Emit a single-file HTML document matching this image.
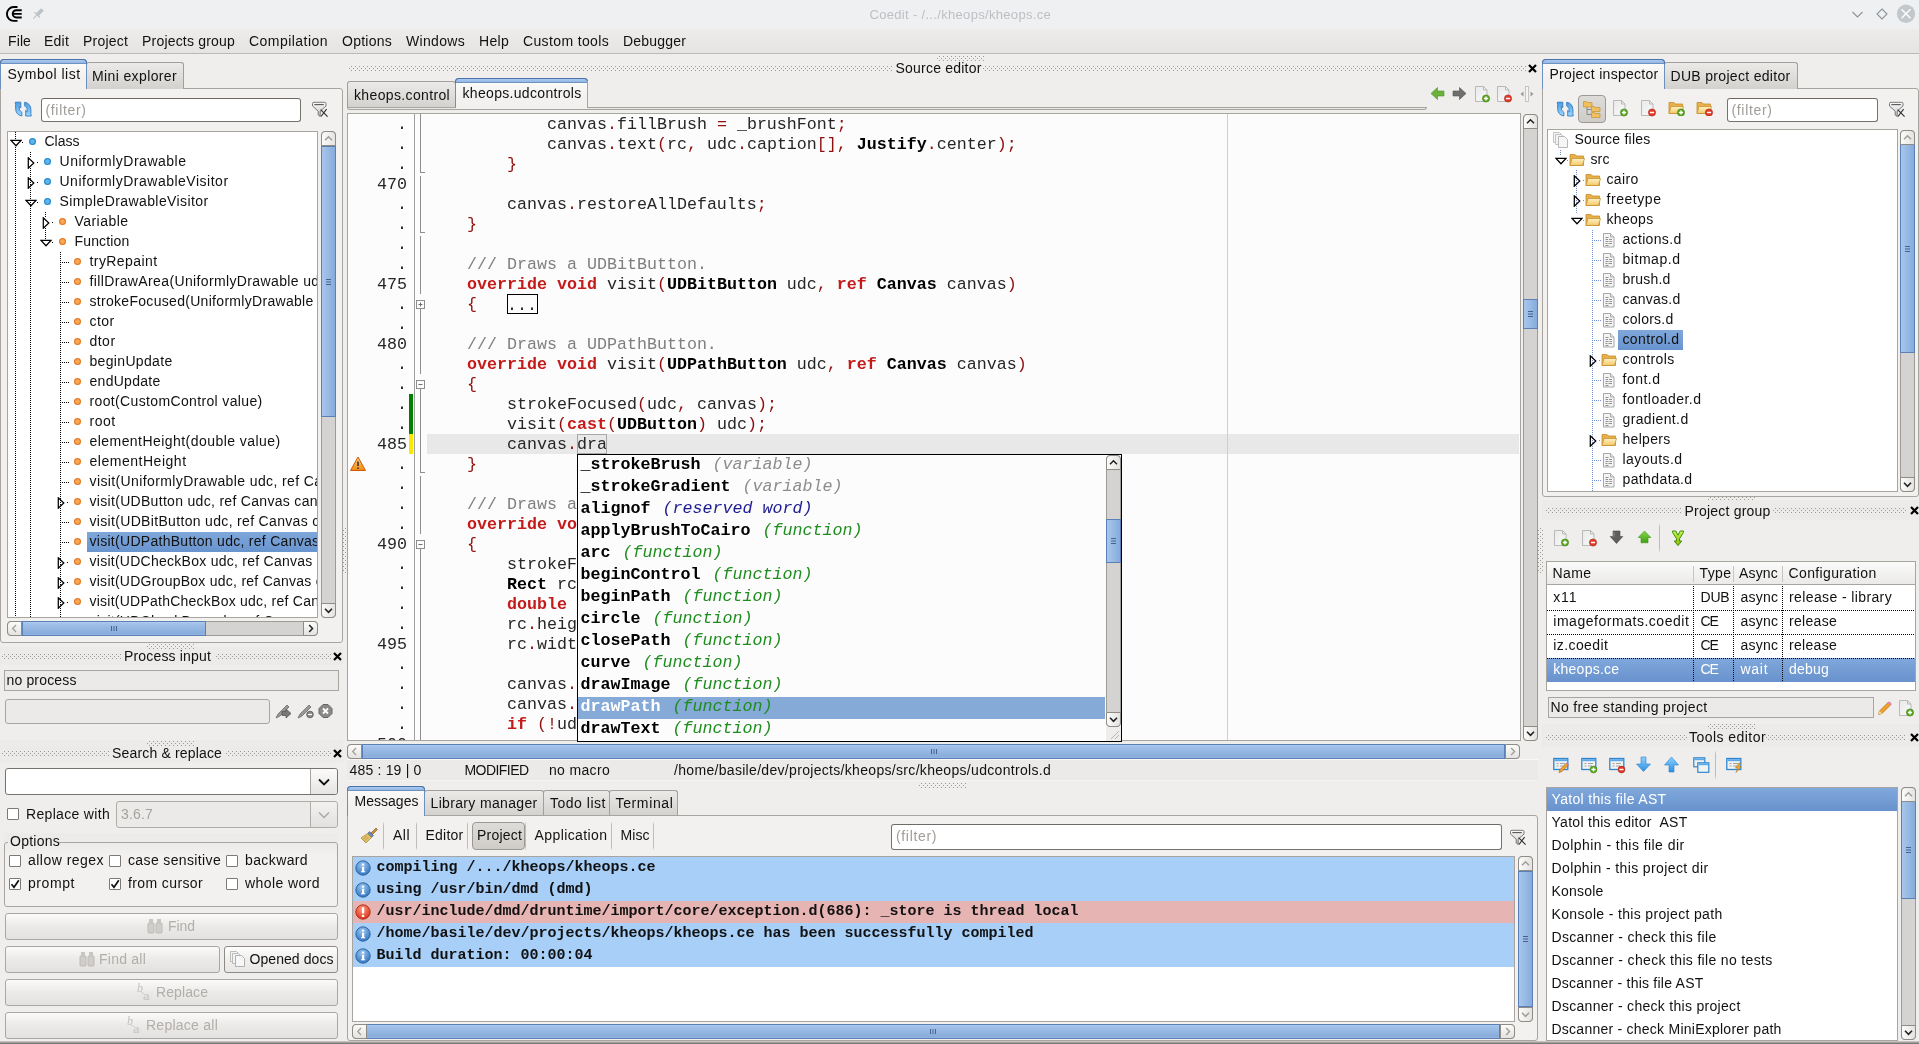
<!DOCTYPE html><html><head><meta charset="utf-8"><style>
html,body{margin:0;padding:0}
body{width:1919px;height:1044px;position:relative;overflow:hidden;background:#efeeec;font-family:'Liberation Sans', sans-serif;font-size:14px;color:#000}
div,svg{position:absolute;box-sizing:border-box}
.t{white-space:pre}
</style></head><body><div id="root" style="left:0;top:0;width:1919px;height:1044px;will-change:transform;">
<div style="left:0px;top:0px;width:1919px;height:29px;background:#eff0f1;"></div>
<svg style="left:0px;top:0px" width="50" height="29"><path d="M17.5 7H13.6A6.7 6.95 0 0 0 13.6 20.9H17.5" stroke="#000" stroke-width="1.9" fill="none"/><path d="M21.7 10.2H16.3A3.6 3.65 0 0 0 16.3 17.5H21.7M13.6 13.9H21.7" stroke="#000" stroke-width="1.9" fill="none"/><path d="M33.3 18.7L36.8 15.2M34.3 12.2L39.8 17.5" stroke="#bcc3c8" stroke-width="1.1"/><path d="M36 13.3L41.2 8.2L43.8 10.8L38.7 16Z" fill="#bcc3c8"/></svg>
<div class="t" style="left:869.5px;top:7.09px;font-size:13px;line-height:16px;color:#bcc0c4;letter-spacing:0.32px;">Coedit - /.../kheops/kheops.ce</div>
<svg style="left:1848px;top:4px" width="70" height="22"><path d="M4.5 8L9.5 13L14.5 8" stroke="#8d9398" stroke-width="1.1" fill="none"/><path d="M34 5L39 10L34 15L29 10Z" stroke="#8d9398" stroke-width="1.1" fill="none"/><circle cx="58" cy="9.8" r="9.2" fill="#c3c8cc"/><path d="M53.5 5.3L62.5 14.3M62.5 5.3L53.5 14.3" stroke="#fff" stroke-width="1.3"/></svg>
<div style="left:0px;top:29px;width:1919px;height:24px;background:linear-gradient(#edeceb,#e5e4e2);"></div>
<div style="left:0px;top:53px;width:1919px;height:1px;background:#bcb9b5;"></div>
<div class="t" style="left:8px;top:32.15px;font-size:14px;line-height:18px;color:#111;letter-spacing:0.113px;">File</div>
<div class="t" style="left:44px;top:32.15px;font-size:14px;line-height:18px;color:#111;letter-spacing:0.219px;">Edit</div>
<div class="t" style="left:83px;top:32.15px;font-size:14px;line-height:18px;color:#111;letter-spacing:0.205px;">Project</div>
<div class="t" style="left:142px;top:32.15px;font-size:14px;line-height:18px;color:#111;letter-spacing:0.198px;">Projects group</div>
<div class="t" style="left:249px;top:32.15px;font-size:14px;line-height:18px;color:#111;letter-spacing:0.464px;">Compilation</div>
<div class="t" style="left:342px;top:32.15px;font-size:14px;line-height:18px;color:#111;letter-spacing:0.252px;">Options</div>
<div class="t" style="left:406px;top:32.15px;font-size:14px;line-height:18px;color:#111;letter-spacing:0.317px;">Windows</div>
<div class="t" style="left:479px;top:32.15px;font-size:14px;line-height:18px;color:#111;letter-spacing:0.305px;">Help</div>
<div class="t" style="left:523px;top:32.15px;font-size:14px;line-height:18px;color:#111;letter-spacing:0.361px;">Custom tools</div>
<div class="t" style="left:623px;top:32.15px;font-size:14px;line-height:18px;color:#111;letter-spacing:0.193px;">Debugger</div>
<div style="left:0px;top:88px;width:343px;height:555px;border:1px solid #a8a4a0;border-radius:0 3px 3px 3px;background:#f2f1ef;"></div>
<div style="left:86px;top:62px;width:98px;height:27px;border:1px solid #a29e9a;border-bottom:none;border-radius:3px 3px 0 0;background:linear-gradient(#ebeae8,#d3d1ce);"></div>
<div class="t" style="left:92px;top:66.65px;font-size:14px;line-height:18px;color:#111;letter-spacing:0.377px;">Mini explorer</div>
<div style="left:0px;top:59px;width:87px;height:30px;border:1px solid #6d8fbd;border-bottom:none;border-radius:4px 4px 0 0;background:linear-gradient(#fdfdfc,#f2f1ef 60%);"></div>
<div style="left:0px;top:59px;width:87px;height:5px;border:1px solid #4a74a9;border-bottom:1px solid #7092c0;border-radius:4px 4px 0 0;background:linear-gradient(#abcaef,#92b6e4);"></div>
<div class="t" style="left:7.5px;top:65.15px;font-size:14px;line-height:18px;color:#111;letter-spacing:0.484px;">Symbol list</div>
<div style="left:1px;top:88px;width:85px;height:2px;background:#f2f1ef;"></div>
<svg style="left:12px;top:98px" width="23" height="23"><defs><linearGradient id="rfg" x1="0" y1="0" x2="0" y2="1"><stop offset="0" stop-color="#4a9ae0"/><stop offset="1" stop-color="#a0dafe"/></linearGradient></defs><path d="M3.3 4.2H8.8V9.8L7.2 8.4Q6.6 12.6 9.8 14.3V18Q3.6 16.8 3.6 10.2V6.6Z" fill="url(#rfg)" stroke="#2f7bc8" stroke-width="0.9" stroke-linejoin="round"/><path d="M19.2 18H13.7V12.4L15.3 13.8Q15.9 9.6 12.7 7.9V4.2Q18.9 5.4 18.9 12V15.6Z" fill="url(#rfg)" stroke="#2f7bc8" stroke-width="0.9" stroke-linejoin="round"/></svg>
<div style="left:41px;top:98px;width:260px;height:24px;border:1px solid #76726e;border-top-color:#6e6a66;border-radius:3px;background:#fff;"></div>
<div class="t" style="left:45.5px;top:101.15px;font-size:14px;line-height:18px;color:#a09c98;letter-spacing:0.656px;">(filter)</div>
<svg style="left:306px;top:96px" width="28" height="28"><defs><linearGradient id="cfg" x1="0" y1="0" x2="0" y2="1"><stop offset="0" stop-color="#fafafa"/><stop offset="1" stop-color="#c8c8c8"/></linearGradient></defs><path d="M6.5 7.5Q6.5 6.3 8 6.3H18.6Q20 6.3 20 7.5V10L14.2 15.2V20.5L12.2 19V15.2L6.5 10Z" fill="url(#cfg)" stroke="#6a6a6a" stroke-width="0.9" stroke-linejoin="round"/><path d="M8.3 8.6H17.8" stroke="#555" stroke-width="1.1"/><path d="M14.6 13.6L21.6 20.6M20.6 13.2L15 20.5" stroke="#333" stroke-width="1.2"/></svg>
<div style="left:7px;top:131px;width:311px;height:487px;background:#fff;border:1px solid #a8a4a0;"></div>
<div style="left:8px;top:132px;width:309px;height:485px;overflow:hidden;">
<div style="left:7px;top:0px;width:1px;height:8px;background:repeating-linear-gradient(#000 0 1px,transparent 1px 2px);"></div>
<div style="left:7px;top:15px;width:1px;height:470px;background:repeating-linear-gradient(#000 0 1px,transparent 1px 2px);"></div>
<div style="left:22px;top:20px;width:1px;height:5px;background:repeating-linear-gradient(#000 0 1px,transparent 1px 2px);"></div>
<div style="left:22px;top:36px;width:1px;height:449px;background:repeating-linear-gradient(#000 0 1px,transparent 1px 2px);"></div>
<div style="left:37px;top:80px;width:1px;height:5px;background:repeating-linear-gradient(#000 0 1px,transparent 1px 2px);"></div>
<div style="left:37px;top:96px;width:1px;height:12px;background:repeating-linear-gradient(#000 0 1px,transparent 1px 2px);"></div>
<div style="left:52px;top:120px;width:1px;height:365px;background:repeating-linear-gradient(#000 0 1px,transparent 1px 2px);"></div>
<svg style="left:1.5px;top:7px" width="12" height="8"><path d="M0.8 1.3H11.2L6 6.8Z" stroke="#000" stroke-width="1.25" fill="none" stroke-linejoin="miter"/></svg>
<div style="left:14.0px;top:10px;width:1px;height:1px;background:#000;"></div>
<div style="left:21.0px;top:6.0px;width:7px;height:7px;border-radius:50%;background:radial-gradient(circle 3.6px at 50% 50%,#62b4ec 0,#62b4ec 50%,#1f86c8 80%);"></div>
<div class="t" style="left:36.5px;top:0.15px;font-size:14px;line-height:18px;color:#111;letter-spacing:0.0px;">Class</div>
<svg style="left:19.0px;top:24.5px" width="8" height="12"><path d="M1.3 0.8V11.2L6.8 6Z" stroke="#000" stroke-width="1.25" fill="none"/></svg>
<div style="left:29.0px;top:30px;width:1px;height:1px;background:#000;"></div>
<div style="left:36.0px;top:26.0px;width:7px;height:7px;border-radius:50%;background:radial-gradient(circle 3.6px at 50% 50%,#62b4ec 0,#62b4ec 50%,#1f86c8 80%);"></div>
<div class="t" style="left:51.5px;top:20.15px;font-size:14px;line-height:18px;color:#111;letter-spacing:0.517px;">UniformlyDrawable</div>
<svg style="left:19.0px;top:44.5px" width="8" height="12"><path d="M1.3 0.8V11.2L6.8 6Z" stroke="#000" stroke-width="1.25" fill="none"/></svg>
<div style="left:29.0px;top:50px;width:1px;height:1px;background:#000;"></div>
<div style="left:36.0px;top:46.0px;width:7px;height:7px;border-radius:50%;background:radial-gradient(circle 3.6px at 50% 50%,#62b4ec 0,#62b4ec 50%,#1f86c8 80%);"></div>
<div class="t" style="left:51.5px;top:40.15px;font-size:14px;line-height:18px;color:#111;letter-spacing:0.507px;">UniformlyDrawableVisitor</div>
<svg style="left:16.5px;top:67px" width="12" height="8"><path d="M0.8 1.3H11.2L6 6.8Z" stroke="#000" stroke-width="1.25" fill="none" stroke-linejoin="miter"/></svg>
<div style="left:29.0px;top:70px;width:1px;height:1px;background:#000;"></div>
<div style="left:36.0px;top:66.0px;width:7px;height:7px;border-radius:50%;background:radial-gradient(circle 3.6px at 50% 50%,#62b4ec 0,#62b4ec 50%,#1f86c8 80%);"></div>
<div class="t" style="left:51.5px;top:60.15px;font-size:14px;line-height:18px;color:#111;letter-spacing:0.403px;">SimpleDrawableVisitor</div>
<svg style="left:34.0px;top:84.5px" width="8" height="12"><path d="M1.3 0.8V11.2L6.8 6Z" stroke="#000" stroke-width="1.25" fill="none"/></svg>
<div style="left:44.0px;top:90px;width:1px;height:1px;background:#000;"></div>
<div style="left:51.0px;top:86.0px;width:7px;height:7px;border-radius:50%;background:radial-gradient(circle 3.6px at 50% 50%,#f9a85a 0,#f9a85a 50%,#e2761e 80%);"></div>
<div class="t" style="left:66.5px;top:80.15px;font-size:14px;line-height:18px;color:#111;letter-spacing:0.459px;">Variable</div>
<svg style="left:31.5px;top:107px" width="12" height="8"><path d="M0.8 1.3H11.2L6 6.8Z" stroke="#000" stroke-width="1.25" fill="none" stroke-linejoin="miter"/></svg>
<div style="left:44.0px;top:110px;width:1px;height:1px;background:#000;"></div>
<div style="left:51.0px;top:106.0px;width:7px;height:7px;border-radius:50%;background:radial-gradient(circle 3.6px at 50% 50%,#f9a85a 0,#f9a85a 50%,#e2761e 80%);"></div>
<div class="t" style="left:66.5px;top:100.15px;font-size:14px;line-height:18px;color:#111;letter-spacing:0.166px;">Function</div>
<div style="left:53.5px;top:130px;width:8.0px;height:1px;background:repeating-linear-gradient(to right,#000 0 1px,transparent 1px 2px);"></div>
<div style="left:66.0px;top:126.0px;width:7px;height:7px;border-radius:50%;background:radial-gradient(circle 3.6px at 50% 50%,#f9a85a 0,#f9a85a 50%,#e2761e 80%);"></div>
<div class="t" style="left:81.5px;top:120.15px;font-size:14px;line-height:18px;color:#111;letter-spacing:0.422px;">tryRepaint</div>
<div style="left:53.5px;top:150px;width:8.0px;height:1px;background:repeating-linear-gradient(to right,#000 0 1px,transparent 1px 2px);"></div>
<div style="left:66.0px;top:146.0px;width:7px;height:7px;border-radius:50%;background:radial-gradient(circle 3.6px at 50% 50%,#f9a85a 0,#f9a85a 50%,#e2761e 80%);"></div>
<div class="t" style="left:81.5px;top:140.15px;font-size:14px;line-height:18px;color:#111;letter-spacing:0.369px;">fillDrawArea(UniformlyDrawable udc, ref Canvas canvas)</div>
<div style="left:53.5px;top:170px;width:8.0px;height:1px;background:repeating-linear-gradient(to right,#000 0 1px,transparent 1px 2px);"></div>
<div style="left:66.0px;top:166.0px;width:7px;height:7px;border-radius:50%;background:radial-gradient(circle 3.6px at 50% 50%,#f9a85a 0,#f9a85a 50%,#e2761e 80%);"></div>
<div class="t" style="left:81.5px;top:160.15px;font-size:14px;line-height:18px;color:#111;letter-spacing:0.301px;">strokeFocused(UniformlyDrawable udc, ref Canvas canvas)</div>
<div style="left:53.5px;top:190px;width:8.0px;height:1px;background:repeating-linear-gradient(to right,#000 0 1px,transparent 1px 2px);"></div>
<div style="left:66.0px;top:186.0px;width:7px;height:7px;border-radius:50%;background:radial-gradient(circle 3.6px at 50% 50%,#f9a85a 0,#f9a85a 50%,#e2761e 80%);"></div>
<div class="t" style="left:81.5px;top:180.15px;font-size:14px;line-height:18px;color:#111;letter-spacing:0.418px;">ctor</div>
<div style="left:53.5px;top:210px;width:8.0px;height:1px;background:repeating-linear-gradient(to right,#000 0 1px,transparent 1px 2px);"></div>
<div style="left:66.0px;top:206.0px;width:7px;height:7px;border-radius:50%;background:radial-gradient(circle 3.6px at 50% 50%,#f9a85a 0,#f9a85a 50%,#e2761e 80%);"></div>
<div class="t" style="left:81.5px;top:200.15px;font-size:14px;line-height:18px;color:#111;letter-spacing:0.473px;">dtor</div>
<div style="left:53.5px;top:230px;width:8.0px;height:1px;background:repeating-linear-gradient(to right,#000 0 1px,transparent 1px 2px);"></div>
<div style="left:66.0px;top:226.0px;width:7px;height:7px;border-radius:50%;background:radial-gradient(circle 3.6px at 50% 50%,#f9a85a 0,#f9a85a 50%,#e2761e 80%);"></div>
<div class="t" style="left:81.5px;top:220.15px;font-size:14px;line-height:18px;color:#111;letter-spacing:0.331px;">beginUpdate</div>
<div style="left:53.5px;top:250px;width:8.0px;height:1px;background:repeating-linear-gradient(to right,#000 0 1px,transparent 1px 2px);"></div>
<div style="left:66.0px;top:246.0px;width:7px;height:7px;border-radius:50%;background:radial-gradient(circle 3.6px at 50% 50%,#f9a85a 0,#f9a85a 50%,#e2761e 80%);"></div>
<div class="t" style="left:81.5px;top:240.15px;font-size:14px;line-height:18px;color:#111;letter-spacing:0.281px;">endUpdate</div>
<div style="left:53.5px;top:270px;width:8.0px;height:1px;background:repeating-linear-gradient(to right,#000 0 1px,transparent 1px 2px);"></div>
<div style="left:66.0px;top:266.0px;width:7px;height:7px;border-radius:50%;background:radial-gradient(circle 3.6px at 50% 50%,#f9a85a 0,#f9a85a 50%,#e2761e 80%);"></div>
<div class="t" style="left:81.5px;top:260.15px;font-size:14px;line-height:18px;color:#111;letter-spacing:0.356px;">root(CustomControl value)</div>
<div style="left:53.5px;top:290px;width:8.0px;height:1px;background:repeating-linear-gradient(to right,#000 0 1px,transparent 1px 2px);"></div>
<div style="left:66.0px;top:286.0px;width:7px;height:7px;border-radius:50%;background:radial-gradient(circle 3.6px at 50% 50%,#f9a85a 0,#f9a85a 50%,#e2761e 80%);"></div>
<div class="t" style="left:81.5px;top:280.15px;font-size:14px;line-height:18px;color:#111;letter-spacing:0.473px;">root</div>
<div style="left:53.5px;top:310px;width:8.0px;height:1px;background:repeating-linear-gradient(to right,#000 0 1px,transparent 1px 2px);"></div>
<div style="left:66.0px;top:306.0px;width:7px;height:7px;border-radius:50%;background:radial-gradient(circle 3.6px at 50% 50%,#f9a85a 0,#f9a85a 50%,#e2761e 80%);"></div>
<div class="t" style="left:81.5px;top:300.15px;font-size:14px;line-height:18px;color:#111;letter-spacing:0.448px;">elementHeight(double value)</div>
<div style="left:53.5px;top:330px;width:8.0px;height:1px;background:repeating-linear-gradient(to right,#000 0 1px,transparent 1px 2px);"></div>
<div style="left:66.0px;top:326.0px;width:7px;height:7px;border-radius:50%;background:radial-gradient(circle 3.6px at 50% 50%,#f9a85a 0,#f9a85a 50%,#e2761e 80%);"></div>
<div class="t" style="left:81.5px;top:320.15px;font-size:14px;line-height:18px;color:#111;letter-spacing:0.52px;">elementHeight</div>
<div style="left:53.5px;top:350px;width:8.0px;height:1px;background:repeating-linear-gradient(to right,#000 0 1px,transparent 1px 2px);"></div>
<div style="left:66.0px;top:346.0px;width:7px;height:7px;border-radius:50%;background:radial-gradient(circle 3.6px at 50% 50%,#f9a85a 0,#f9a85a 50%,#e2761e 80%);"></div>
<div class="t" style="left:81.5px;top:340.15px;font-size:14px;line-height:18px;color:#111;letter-spacing:0.388px;">visit(UniformlyDrawable udc, ref Canvas canvas)</div>
<svg style="left:49.0px;top:364.5px" width="8" height="12"><path d="M1.3 0.8V11.2L6.8 6Z" stroke="#000" stroke-width="1.25" fill="none"/></svg>
<div style="left:59.0px;top:370px;width:1px;height:1px;background:#000;"></div>
<div style="left:66.0px;top:366.0px;width:7px;height:7px;border-radius:50%;background:radial-gradient(circle 3.6px at 50% 50%,#f9a85a 0,#f9a85a 50%,#e2761e 80%);"></div>
<div class="t" style="left:81.5px;top:360.15px;font-size:14px;line-height:18px;color:#111;letter-spacing:0.309px;">visit(UDButton udc, ref Canvas canvas)</div>
<div style="left:53.5px;top:390px;width:8.0px;height:1px;background:repeating-linear-gradient(to right,#000 0 1px,transparent 1px 2px);"></div>
<div style="left:66.0px;top:386.0px;width:7px;height:7px;border-radius:50%;background:radial-gradient(circle 3.6px at 50% 50%,#f9a85a 0,#f9a85a 50%,#e2761e 80%);"></div>
<div class="t" style="left:81.5px;top:380.15px;font-size:14px;line-height:18px;color:#111;letter-spacing:0.327px;">visit(UDBitButton udc, ref Canvas canvas)</div>
<div style="left:79px;top:400px;width:309px;height:20px;background:linear-gradient(#7fa7da,#6894cf);"></div>
<div style="left:53.5px;top:410px;width:8.0px;height:1px;background:repeating-linear-gradient(to right,#000 0 1px,transparent 1px 2px);"></div>
<div style="left:66.0px;top:406.0px;width:7px;height:7px;border-radius:50%;background:radial-gradient(circle 3.6px at 50% 50%,#f9a85a 0,#f9a85a 50%,#e2761e 80%);"></div>
<div class="t" style="left:81.5px;top:400.15px;font-size:14px;line-height:18px;color:#111;letter-spacing:0.285px;">visit(UDPathButton udc, ref Canvas canvas)</div>
<svg style="left:49.0px;top:424.5px" width="8" height="12"><path d="M1.3 0.8V11.2L6.8 6Z" stroke="#000" stroke-width="1.25" fill="none"/></svg>
<div style="left:59.0px;top:430px;width:1px;height:1px;background:#000;"></div>
<div style="left:66.0px;top:426.0px;width:7px;height:7px;border-radius:50%;background:radial-gradient(circle 3.6px at 50% 50%,#f9a85a 0,#f9a85a 50%,#e2761e 80%);"></div>
<div class="t" style="left:81.5px;top:420.15px;font-size:14px;line-height:18px;color:#111;letter-spacing:0.261px;">visit(UDCheckBox udc, ref Canvas canvas)</div>
<svg style="left:49.0px;top:444.5px" width="8" height="12"><path d="M1.3 0.8V11.2L6.8 6Z" stroke="#000" stroke-width="1.25" fill="none"/></svg>
<div style="left:59.0px;top:450px;width:1px;height:1px;background:#000;"></div>
<div style="left:66.0px;top:446.0px;width:7px;height:7px;border-radius:50%;background:radial-gradient(circle 3.6px at 50% 50%,#f9a85a 0,#f9a85a 50%,#e2761e 80%);"></div>
<div class="t" style="left:81.5px;top:440.15px;font-size:14px;line-height:18px;color:#111;letter-spacing:0.255px;">visit(UDGroupBox udc, ref Canvas canvas)</div>
<svg style="left:49.0px;top:464.5px" width="8" height="12"><path d="M1.3 0.8V11.2L6.8 6Z" stroke="#000" stroke-width="1.25" fill="none"/></svg>
<div style="left:59.0px;top:470px;width:1px;height:1px;background:#000;"></div>
<div style="left:66.0px;top:466.0px;width:7px;height:7px;border-radius:50%;background:radial-gradient(circle 3.6px at 50% 50%,#f9a85a 0,#f9a85a 50%,#e2761e 80%);"></div>
<div class="t" style="left:81.5px;top:460.15px;font-size:14px;line-height:18px;color:#111;letter-spacing:0.241px;">visit(UDPathCheckBox udc, ref Canvas canvas)</div>
<div style="left:53.5px;top:490px;width:8.0px;height:1px;background:repeating-linear-gradient(to right,#000 0 1px,transparent 1px 2px);"></div>
<div style="left:66.0px;top:486.0px;width:7px;height:7px;border-radius:50%;background:radial-gradient(circle 3.6px at 50% 50%,#f9a85a 0,#f9a85a 50%,#e2761e 80%);"></div>
<div class="t" style="left:81.5px;top:480.15px;font-size:14px;line-height:18px;color:#111;letter-spacing:0.261px;">visit(UDCheckBox udc, ref Canvas canvas)</div>
</div>
<div style="left:321px;top:131px;width:15px;height:487px;border:1px solid #9e9a96;border-radius:4px;background:#d4d3d1;"></div>
<div style="left:321px;top:146px;width:15px;height:271px;border:1px solid #5a80b6;background:linear-gradient(to right,#a8c6ec,#86acdc);"></div>
<div style="left:321px;top:131px;width:15px;height:15px;border:1px solid #8f8b87;border-radius:4px 4px 0 0;background:linear-gradient(to right,#fbfbfa,#e4e3e1);"></div>
<div style="left:321px;top:603px;width:15px;height:15px;border:1px solid #8f8b87;border-radius:0 0 4px 4px;background:linear-gradient(to right,#fbfbfa,#e4e3e1);"></div>
<svg style="left:321px;top:131px" width="15" height="15"><path d="M4.0 9.2L7.5 5.7L11.0 9.2" stroke="#a29e9a" stroke-width="1.5" fill="none"/></svg>
<svg style="left:321px;top:603px" width="15" height="15"><path d="M4.0 5.8L7.5 9.3L11.0 5.8" stroke="#222" stroke-width="1.6" fill="none"/></svg>
<svg style="left:321px;top:277.5px" width="15" height="8"><path d="M5.0 1.5h5M5.0 4h5M5.0 6.5h5" stroke="#46628e" stroke-width="1"/></svg>
<div style="left:7px;top:621px;width:311px;height:15px;border:1px solid #9e9a96;border-radius:4px;background:#d4d3d1;"></div>
<div style="left:22px;top:621px;width:184px;height:15px;border:1px solid #5a80b6;background:linear-gradient(#b3cff0,#a2c1ea 12%,#88acdb 88%,#98b8e3);"></div>
<div style="left:7px;top:621px;width:15px;height:15px;border:1px solid #8f8b87;border-radius:4px 0 0 4px;background:linear-gradient(#fbfbfa,#e4e3e1);"></div>
<div style="left:303px;top:621px;width:15px;height:15px;border:1px solid #8f8b87;border-radius:0 4px 4px 0;background:linear-gradient(#fbfbfa,#e4e3e1);"></div>
<svg style="left:7px;top:621px" width="15" height="15"><path d="M9 4.0L5.7 7.5L9 11.0" stroke="#a29e9a" stroke-width="1.3" fill="none"/></svg>
<svg style="left:303px;top:621px" width="15" height="15"><path d="M6.2 4.0L9.5 7.5L6.2 11.0" stroke="#222" stroke-width="1.5" fill="none"/></svg>
<svg style="left:110.0px;top:621px" width="8" height="15"><path d="M1.5 5.0v5M4 5.0v5M6.5 5.0v5" stroke="#46628e" stroke-width="1"/></svg>
<div style="left:0px;top:647px;width:343px;height:18px;background:#ecebe9;"></div>
<svg style="position:absolute;left:2px;top:654px" width="120" height="6"><defs><pattern id="dp2_654" x="0" y="0" width="4" height="4" patternUnits="userSpaceOnUse"><rect x="2" y="0" width="1" height="1" fill="#9c9894"/><rect x="0" y="2" width="1" height="1" fill="#9c9894"/></pattern></defs><rect x="0" y="0" width="120" height="5" fill="url(#dp2_654)"/></svg>
<svg style="position:absolute;left:216px;top:654px" width="115" height="6"><defs><pattern id="dp216_654" x="0" y="0" width="4" height="4" patternUnits="userSpaceOnUse"><rect x="2" y="0" width="1" height="1" fill="#9c9894"/><rect x="0" y="2" width="1" height="1" fill="#9c9894"/></pattern></defs><rect x="0" y="0" width="115" height="5" fill="url(#dp216_654)"/></svg>
<div class="t" style="left:124px;top:647.15px;font-size:14px;line-height:18px;color:#111;letter-spacing:0.169px;">Process input</div>
<svg style="position:absolute;left:333px;top:652px" width="9" height="9"><path d="M1 1L8 8M8 1L1 8" stroke="#000" stroke-width="2.2"/></svg>
<div style="left:4px;top:670px;width:335px;height:21px;background:#ebeae8;border:1px solid #a8a4a0;"></div>
<div class="t" style="left:6.5px;top:671.15px;font-size:14px;line-height:18px;color:#111;letter-spacing:0.155px;">no process</div>
<div style="left:5px;top:699px;width:265px;height:25px;background:#ebeae8;border:1px solid #a8a4a0;border-radius:3px;"></div>
<svg style="left:275px;top:703px" width="62" height="16"><path d="M1 15L3 11L12 2L14 4L5 13Z" fill="#9a9896" stroke="#6e6c6a" stroke-width="0.8"/><path d="M7 8.5h4V6l5 4.5l-5 4.5v-2.5H7Z" fill="#7a7876" stroke="#555" stroke-width="0.8"/><path d="M23 15L25 11L34 2L36 4L27 13Z" fill="#9a9896" stroke="#6e6c6a" stroke-width="0.8"/><circle cx="35" cy="11.5" r="3.3" fill="#8a8886" stroke="#555" stroke-width="0.8"/><path d="M33 11.5h4" stroke="#fff" stroke-width="1.2"/><path d="M48 1.5h5l4 4v5l-4 4h-5l-4-4v-5Z" fill="#8c8a88" stroke="#666" stroke-width="1"/><path d="M48 5.5L53 10.5M53 5.5L48 10.5" stroke="#fff" stroke-width="1.8"/></svg>
<div style="left:0px;top:740px;width:343px;height:23px;background:#ecebe9;"></div>
<svg style="position:absolute;left:2px;top:751px" width="108" height="6"><defs><pattern id="dp2_751" x="0" y="0" width="4" height="4" patternUnits="userSpaceOnUse"><rect x="2" y="0" width="1" height="1" fill="#9c9894"/><rect x="0" y="2" width="1" height="1" fill="#9c9894"/></pattern></defs><rect x="0" y="0" width="108" height="5" fill="url(#dp2_751)"/></svg>
<svg style="position:absolute;left:226px;top:751px" width="105" height="6"><defs><pattern id="dp226_751" x="0" y="0" width="4" height="4" patternUnits="userSpaceOnUse"><rect x="2" y="0" width="1" height="1" fill="#9c9894"/><rect x="0" y="2" width="1" height="1" fill="#9c9894"/></pattern></defs><rect x="0" y="0" width="105" height="5" fill="url(#dp226_751)"/></svg>
<div class="t" style="left:112px;top:744.15px;font-size:14px;line-height:18px;color:#111;letter-spacing:0.165px;">Search &amp; replace</div>
<svg style="position:absolute;left:333px;top:749px" width="9" height="9"><path d="M1 1L8 8M8 1L1 8" stroke="#000" stroke-width="2.2"/></svg>
<div style="left:5px;top:768px;width:333px;height:27px;background:#fff;border:1px solid #76726e;border-radius:3px;"></div>
<div style="left:310px;top:769px;width:27px;height:25px;background:linear-gradient(#fbfbfa,#e6e5e3);border-left:1px solid #a8a4a0;border-radius:0 3px 3px 0;"></div>
<svg style="left:317px;top:777px" width="14" height="10"><path d="M2 2.5L7 7.5L12 2.5" stroke="#111" stroke-width="1.8" fill="none"/></svg>
<div style="left:7px;top:808px;width:12px;height:12px;background:#fff;border:1px solid #7d7975;border-radius:1px;"></div>
<div class="t" style="left:26px;top:805.15px;font-size:14px;line-height:18px;color:#111;letter-spacing:0.323px;">Replace with</div>
<div style="left:116px;top:801px;width:222px;height:27px;background:#ebeae8;border:1px solid #b0aca8;border-radius:3px;"></div>
<div style="left:310px;top:802px;width:27px;height:25px;background:linear-gradient(#f3f2f0,#e2e1df);border-left:1px solid #b0aca8;border-radius:0 3px 3px 0;"></div>
<svg style="left:317px;top:810px" width="14" height="10"><path d="M2 2.5L7 7.5L12 2.5" stroke="#aaa6a2" stroke-width="1.4" fill="none"/></svg>
<div class="t" style="left:121px;top:805.15px;font-size:14px;line-height:18px;color:#a6a29e;letter-spacing:0.175px;">3.6.7</div>
<div style="left:4px;top:833px;width:334px;height:10px;background:#ecebe9;"></div>
<div style="left:4px;top:842px;width:334px;height:65px;border:1px solid #a8a4a0;border-radius:3px;background:linear-gradient(#ecebe9,#f2f1ef 12px);"></div>
<div style="left:8px;top:836px;width:51px;height:9px;background:#ecebe9;"></div>
<div class="t" style="left:10px;top:832.15px;font-size:14px;line-height:18px;color:#111;letter-spacing:0.252px;">Options</div>
<div style="left:9px;top:855px;width:12px;height:12px;background:#fff;border:1px solid #7d7975;border-radius:1px;"></div>
<div class="t" style="left:28px;top:850.65px;font-size:14px;line-height:18px;color:#111;letter-spacing:0.474px;">allow regex</div>
<div style="left:109px;top:855px;width:12px;height:12px;background:#fff;border:1px solid #7d7975;border-radius:1px;"></div>
<div class="t" style="left:128px;top:850.65px;font-size:14px;line-height:18px;color:#111;letter-spacing:0.364px;">case sensitive</div>
<div style="left:226px;top:855px;width:12px;height:12px;background:#fff;border:1px solid #7d7975;border-radius:1px;"></div>
<div class="t" style="left:245px;top:850.65px;font-size:14px;line-height:18px;color:#111;letter-spacing:0.389px;">backward</div>
<div style="left:9px;top:878px;width:12px;height:12px;background:#fff;border:1px solid #7d7975;border-radius:1px;"></div>
<svg style="left:9px;top:878px" width="12" height="12"><path d="M2.5 6.2L5 9.3L9.8 2.2" stroke="#111" stroke-width="1.7" fill="none"/></svg>
<div class="t" style="left:28px;top:874.15px;font-size:14px;line-height:18px;color:#111;letter-spacing:0.576px;">prompt</div>
<div style="left:109px;top:878px;width:12px;height:12px;background:#fff;border:1px solid #7d7975;border-radius:1px;"></div>
<svg style="left:109px;top:878px" width="12" height="12"><path d="M2.5 6.2L5 9.3L9.8 2.2" stroke="#111" stroke-width="1.7" fill="none"/></svg>
<div class="t" style="left:128px;top:874.15px;font-size:14px;line-height:18px;color:#111;letter-spacing:0.386px;">from cursor</div>
<div style="left:226px;top:878px;width:12px;height:12px;background:#fff;border:1px solid #7d7975;border-radius:1px;"></div>
<div class="t" style="left:245px;top:874.15px;font-size:14px;line-height:18px;color:#111;letter-spacing:0.422px;">whole word</div>
<div style="left:5px;top:913px;width:333px;height:27px;border:1px solid #aaa6a2;border-radius:3px;background:linear-gradient(#fafaf9,#ebeae8 50%,#e3e2e0);"></div>
<div class="t" style="left:168px;top:917.15px;font-size:14px;line-height:18px;color:#b2aeaa;letter-spacing:-0.055px;">Find</div>
<svg style="left:147px;top:918px" width="16" height="16"><rect x="1" y="5" width="6" height="10" rx="1" fill="#d0cecb" stroke="#bdbab6"/><rect x="9" y="5" width="6" height="10" rx="1" fill="#d0cecb" stroke="#bdbab6"/><rect x="2" y="1" width="4" height="4" fill="#c8c6c3"/><rect x="10" y="1" width="4" height="4" fill="#c8c6c3"/></svg>
<div style="left:5px;top:946px;width:215px;height:27px;border:1px solid #aaa6a2;border-radius:3px;background:linear-gradient(#fafaf9,#ebeae8 50%,#e3e2e0);"></div>
<div class="t" style="left:99px;top:950.15px;font-size:14px;line-height:18px;color:#b2aeaa;letter-spacing:0.236px;">Find all</div>
<svg style="left:79px;top:951px" width="16" height="16"><rect x="1" y="5" width="6" height="10" rx="1" fill="#d0cecb" stroke="#bdbab6"/><rect x="9" y="5" width="6" height="10" rx="1" fill="#d0cecb" stroke="#bdbab6"/><rect x="2" y="1" width="4" height="4" fill="#c8c6c3"/><rect x="10" y="1" width="4" height="4" fill="#c8c6c3"/></svg>
<div style="left:224px;top:946px;width:114px;height:27px;border:1px solid #8e8a86;border-radius:3px;background:linear-gradient(#fdfdfd,#f0efee 50%,#e8e7e5);"></div>
<svg style="left:229px;top:950px" width="18" height="18"><path d="M1.5 1.5h6l2 2v8h-8Z" fill="#f4f4f4" stroke="#b4b4b4" stroke-width="0.9"/><path d="M3.5 3.5h6l2 2v8h-8Z" fill="#f4f4f4" stroke="#b4b4b4" stroke-width="0.9"/><path d="M6.5 5.5h6l3 3v8h-9Z" fill="#f6f6f6" stroke="#a8a8a8" stroke-width="0.9"/></svg>
<div class="t" style="left:249.5px;top:950.15px;font-size:14px;line-height:18px;color:#111;letter-spacing:0.068px;">Opened docs</div>
<div style="left:5px;top:979px;width:333px;height:27px;border:1px solid #aaa6a2;border-radius:3px;background:linear-gradient(#fafaf9,#ebeae8 50%,#e3e2e0);"></div>
<div class="t" style="left:156px;top:983.15px;font-size:14px;line-height:18px;color:#b2aeaa;letter-spacing:0.094px;">Replace</div>
<svg style="left:136px;top:983px" width="18" height="18"><text x="1" y="9" font-family="Liberation Serif" font-style="italic" font-size="12" fill="#c4c1be">b</text><path d="M5 8.5L8 11" stroke="#c8c5c2" stroke-width="0.8"/><text x="7" y="17" font-family="Liberation Serif" font-weight="bold" font-size="13" fill="#c8c5c2">a</text><path d="M7.5 13.5h8M7.5 15.5h8" stroke="#dcdad7" stroke-width="0.6"/></svg>
<div style="left:5px;top:1012px;width:333px;height:27px;border:1px solid #aaa6a2;border-radius:3px;background:linear-gradient(#fafaf9,#ebeae8 50%,#e3e2e0);"></div>
<div class="t" style="left:146px;top:1016.15px;font-size:14px;line-height:18px;color:#b2aeaa;letter-spacing:0.251px;">Replace all</div>
<svg style="left:126px;top:1016px" width="18" height="18"><text x="1" y="9" font-family="Liberation Serif" font-style="italic" font-size="12" fill="#c4c1be">b</text><path d="M5 8.5L8 11" stroke="#c8c5c2" stroke-width="0.8"/><text x="7" y="17" font-family="Liberation Serif" font-weight="bold" font-size="13" fill="#c8c5c2">a</text><path d="M7.5 13.5h8M7.5 15.5h8" stroke="#dcdad7" stroke-width="0.6"/></svg>
<svg style="left:0;top:0" width="1" height="1"><defs><linearGradient id="docg" x1="0" y1="0" x2="1" y2="1"><stop offset="0" stop-color="#e8e9ea"/><stop offset="1" stop-color="#fafafa"/></linearGradient></defs></svg>
<svg style="position:absolute;left:349px;top:66px" width="543" height="6"><defs><pattern id="dp349_66" x="0" y="0" width="4" height="4" patternUnits="userSpaceOnUse"><rect x="2" y="0" width="1" height="1" fill="#9c9894"/><rect x="0" y="2" width="1" height="1" fill="#9c9894"/></pattern></defs><rect x="0" y="0" width="543" height="5" fill="url(#dp349_66)"/></svg>
<svg style="position:absolute;left:983px;top:66px" width="543" height="6"><defs><pattern id="dp983_66" x="0" y="0" width="4" height="4" patternUnits="userSpaceOnUse"><rect x="2" y="0" width="1" height="1" fill="#9c9894"/><rect x="0" y="2" width="1" height="1" fill="#9c9894"/></pattern></defs><rect x="0" y="0" width="543" height="5" fill="url(#dp983_66)"/></svg>
<div class="t" style="left:895.5px;top:59.15px;font-size:14px;line-height:18px;color:#111;letter-spacing:0.213px;">Source editor</div>
<svg style="position:absolute;left:1528px;top:64px" width="9" height="9"><path d="M1 1L8 8M8 1L1 8" stroke="#000" stroke-width="2.2"/></svg>
<div style="left:347px;top:81px;width:109px;height:27px;border:1px solid #a29e9a;border-bottom:none;border-radius:3px 3px 0 0;background:linear-gradient(#ebeae8,#d3d1ce);"></div>
<div class="t" style="left:354px;top:86.15px;font-size:14px;line-height:18px;color:#111;letter-spacing:0.356px;">kheops.control</div>
<div style="left:455px;top:78px;width:133px;height:30px;border:1px solid #6d8fbd;border-bottom:none;border-radius:4px 4px 0 0;background:linear-gradient(#fdfdfc,#f2f1ef 60%);"></div>
<div style="left:455px;top:78px;width:133px;height:5px;border:1px solid #4a74a9;border-bottom:1px solid #7092c0;border-radius:4px 4px 0 0;background:linear-gradient(#abcaef,#92b6e4);"></div>
<div class="t" style="left:462.5px;top:84.15px;font-size:14px;line-height:18px;color:#111;letter-spacing:0.319px;">kheops.udcontrols</div>
<div style="left:587px;top:81px;width:840px;height:27px;border-left:1px solid #a8a4a0;"></div>
<div style="left:347px;top:107px;width:1080px;height:3px;border:1px solid #a8a4a0;border-radius:0 0 3px 3px;background:#e9e8e6;"></div>
<div style="left:456px;top:106px;width:131px;height:3px;background:#f2f1ef;"></div>
<svg style="left:1430px;top:87px" width="40" height="15"><path d="M1 6.5L7.5 0.5V4H14V9H7.5V12.5Z" fill="#6ab23c" stroke="#4e9128" stroke-width="0.6"/><path d="M36 6.5L29.5 0.5V4H23V9H29.5V12.5Z" fill="#6e6e6e" stroke="#505050" stroke-width="0.6"/></svg>
<svg style="left:1474px;top:86px" width="17" height="17"><path d="M1.5 0.5h8l3.5 3.5v11.5h-11.5Z" fill="url(#docg)" stroke="#b2b2b2" stroke-width="0.9"/><path d="M9.5 0.5v3.5h3.5" fill="none" stroke="#b2b2b2" stroke-width="0.9"/><circle cx="12" cy="12.5" r="3.6" fill="#5aa620" stroke="#3f7f12" stroke-width="0.6"/><path d="M9.9 12.5h4.2M12 10.4v4.2" stroke="#fff" stroke-width="1.4"/></svg>
<svg style="left:1496px;top:86px" width="17" height="17"><path d="M1.5 0.5h8l3.5 3.5v11.5h-11.5Z" fill="url(#docg)" stroke="#b2b2b2" stroke-width="0.9"/><path d="M9.5 0.5v3.5h3.5" fill="none" stroke="#b2b2b2" stroke-width="0.9"/><circle cx="12" cy="12.5" r="3.6" fill="#e23a28" stroke="#a82015" stroke-width="0.6"/><path d="M9.9 12.5h4.2" stroke="#fff" stroke-width="1.5"/></svg>
<svg style="left:1520px;top:86px" width="14" height="17"><rect x="5.5" y="0.5" width="3" height="15" fill="#f4f4f4" stroke="#b8b8b8" stroke-width="0.8"/><path d="M0.5 8L3.5 5.5V10.5Z M13.5 8L10.5 5.5V10.5Z" fill="#9a9a9a"/></svg>
<div style="left:347px;top:113px;width:1174px;height:628px;background:#fcfcfc;border:1px solid #a8a4a0;"></div>
<div style="left:427px;top:434px;width:1092px;height:20px;background:#e8e8e8;"></div>
<div style="left:1227px;top:114px;width:1px;height:626px;background:#cfcfcf;"></div>
<div style="left:414px;top:114px;width:1px;height:626px;background:#a0a0a0;"></div>
<div style="left:420px;top:114px;width:1px;height:59px;background:#8e8e8e;"></div>
<div style="left:420px;top:172px;width:5px;height:1px;background:#8e8e8e;"></div>
<div style="left:420px;top:176px;width:1px;height:57px;background:#8e8e8e;"></div>
<div style="left:420px;top:232px;width:5px;height:1px;background:#8e8e8e;"></div>
<div style="left:420px;top:236px;width:1px;height:58px;background:#8e8e8e;"></div>
<div style="left:420px;top:309px;width:1px;height:65px;background:#8e8e8e;"></div>
<div style="left:420px;top:389px;width:1px;height:84px;background:#8e8e8e;"></div>
<div style="left:420px;top:472px;width:5px;height:1px;background:#8e8e8e;"></div>
<div style="left:420px;top:476px;width:1px;height:58px;background:#8e8e8e;"></div>
<div style="left:420px;top:549px;width:1px;height:191px;background:#8e8e8e;"></div>
<svg style="left:416px;top:300px" width="10" height="10"><rect x="0.5" y="0.5" width="8" height="8" fill="#fcfcfc" stroke="#8e8e8e"/><path d="M2.5 4.5h4M4.5 2.5v4" stroke="#6e6e6e" stroke-width="1"/></svg>
<svg style="left:416px;top:380px" width="10" height="10"><rect x="0.5" y="0.5" width="8" height="8" fill="#fcfcfc" stroke="#8e8e8e"/><path d="M2.5 4.5h4" stroke="#6e6e6e" stroke-width="1"/></svg>
<svg style="left:416px;top:540px" width="10" height="10"><rect x="0.5" y="0.5" width="8" height="8" fill="#fcfcfc" stroke="#8e8e8e"/><path d="M2.5 4.5h4" stroke="#6e6e6e" stroke-width="1"/></svg>
<div style="left:409px;top:394px;width:4px;height:40px;background:#008000;"></div>
<div style="left:409px;top:434px;width:4px;height:20px;background:#fbe700;"></div>
<svg style="left:350px;top:456px" width="17" height="16"><path d="M8 1L15.5 14.5H0.5Z" fill="url(#warng)" stroke="#d45a00" stroke-width="1" stroke-linejoin="round"/><defs><linearGradient id="warng" x1="0" y1="0" x2="0" y2="1"><stop offset="0" stop-color="#ffd28a"/><stop offset="1" stop-color="#f08a10"/></linearGradient></defs><path d="M8 5.5v4.5" stroke="#333" stroke-width="1.6"/><path d="M8 11.5v1.6" stroke="#333" stroke-width="1.6"/></svg>
<div style="left:348px;top:114px;width:1172px;height:626px;overflow:hidden;">
<div class="t" style="left:49px;top:0.56px;font-family:'Liberation Mono', monospace;font-size:16.67px;line-height:20px;color:#262626;">.</div>
<div class="t" style="left:79px;top:0.56px;font-family:'Liberation Mono', monospace;font-size:16.67px;line-height:20px;color:#262626;">            canvas<span style="color:#8e1010">.</span>fillBrush <span style="color:#8e1010">=</span> _brushFont<span style="color:#8e1010">;</span></div>
<div class="t" style="left:49px;top:20.56px;font-family:'Liberation Mono', monospace;font-size:16.67px;line-height:20px;color:#262626;">.</div>
<div class="t" style="left:79px;top:20.56px;font-family:'Liberation Mono', monospace;font-size:16.67px;line-height:20px;color:#262626;">            canvas<span style="color:#8e1010">.</span>text<span style="color:#8e1010">(</span>rc<span style="color:#8e1010">,</span> udc<span style="color:#8e1010">.</span>caption<span style="color:#8e1010">[</span><span style="color:#8e1010">]</span><span style="color:#8e1010">,</span> <b style="color:#000">Justify</b><span style="color:#8e1010">.</span>center<span style="color:#8e1010">)</span><span style="color:#8e1010">;</span></div>
<div class="t" style="left:49px;top:40.56px;font-family:'Liberation Mono', monospace;font-size:16.67px;line-height:20px;color:#262626;">.</div>
<div class="t" style="left:79px;top:40.56px;font-family:'Liberation Mono', monospace;font-size:16.67px;line-height:20px;color:#262626;">        <span style="color:#8e1010">}</span></div>
<div class="t" style="left:29px;top:60.56px;font-family:'Liberation Mono', monospace;font-size:16.67px;line-height:20px;color:#262626;">470</div>
<div class="t" style="left:79px;top:60.56px;font-family:'Liberation Mono', monospace;font-size:16.67px;line-height:20px;color:#262626;"></div>
<div class="t" style="left:49px;top:80.56px;font-family:'Liberation Mono', monospace;font-size:16.67px;line-height:20px;color:#262626;">.</div>
<div class="t" style="left:79px;top:80.56px;font-family:'Liberation Mono', monospace;font-size:16.67px;line-height:20px;color:#262626;">        canvas<span style="color:#8e1010">.</span>restoreAllDefaults<span style="color:#8e1010">;</span></div>
<div class="t" style="left:49px;top:100.56px;font-family:'Liberation Mono', monospace;font-size:16.67px;line-height:20px;color:#262626;">.</div>
<div class="t" style="left:79px;top:100.56px;font-family:'Liberation Mono', monospace;font-size:16.67px;line-height:20px;color:#262626;">    <span style="color:#8e1010">}</span></div>
<div class="t" style="left:49px;top:120.56px;font-family:'Liberation Mono', monospace;font-size:16.67px;line-height:20px;color:#262626;">.</div>
<div class="t" style="left:79px;top:120.56px;font-family:'Liberation Mono', monospace;font-size:16.67px;line-height:20px;color:#262626;"></div>
<div class="t" style="left:49px;top:140.56px;font-family:'Liberation Mono', monospace;font-size:16.67px;line-height:20px;color:#262626;">.</div>
<div class="t" style="left:79px;top:140.56px;font-family:'Liberation Mono', monospace;font-size:16.67px;line-height:20px;color:#262626;">    <span style="color:#7f7f7f">/// Draws a UDBitButton.</span></div>
<div class="t" style="left:29px;top:160.56px;font-family:'Liberation Mono', monospace;font-size:16.67px;line-height:20px;color:#262626;">475</div>
<div class="t" style="left:79px;top:160.56px;font-family:'Liberation Mono', monospace;font-size:16.67px;line-height:20px;color:#262626;">    <b style="color:#c41a1a">override</b> <b style="color:#c41a1a">void</b> visit<span style="color:#8e1010">(</span><b style="color:#000">UDBitButton</b> udc<span style="color:#8e1010">,</span> <b style="color:#c41a1a">ref</b> <b style="color:#000">Canvas</b> canvas<span style="color:#8e1010">)</span></div>
<div class="t" style="left:49px;top:180.56px;font-family:'Liberation Mono', monospace;font-size:16.67px;line-height:20px;color:#262626;">.</div>
<div class="t" style="left:79px;top:180.56px;font-family:'Liberation Mono', monospace;font-size:16.67px;line-height:20px;color:#262626;">    <span style="color:#8e1010">{</span></div>
<div class="t" style="left:49px;top:200.56px;font-family:'Liberation Mono', monospace;font-size:16.67px;line-height:20px;color:#262626;">.</div>
<div class="t" style="left:79px;top:200.56px;font-family:'Liberation Mono', monospace;font-size:16.67px;line-height:20px;color:#262626;"></div>
<div class="t" style="left:29px;top:220.56px;font-family:'Liberation Mono', monospace;font-size:16.67px;line-height:20px;color:#262626;">480</div>
<div class="t" style="left:79px;top:220.56px;font-family:'Liberation Mono', monospace;font-size:16.67px;line-height:20px;color:#262626;">    <span style="color:#7f7f7f">/// Draws a UDPathButton.</span></div>
<div class="t" style="left:49px;top:240.56px;font-family:'Liberation Mono', monospace;font-size:16.67px;line-height:20px;color:#262626;">.</div>
<div class="t" style="left:79px;top:240.56px;font-family:'Liberation Mono', monospace;font-size:16.67px;line-height:20px;color:#262626;">    <b style="color:#c41a1a">override</b> <b style="color:#c41a1a">void</b> visit<span style="color:#8e1010">(</span><b style="color:#000">UDPathButton</b> udc<span style="color:#8e1010">,</span> <b style="color:#c41a1a">ref</b> <b style="color:#000">Canvas</b> canvas<span style="color:#8e1010">)</span></div>
<div class="t" style="left:49px;top:260.56px;font-family:'Liberation Mono', monospace;font-size:16.67px;line-height:20px;color:#262626;">.</div>
<div class="t" style="left:79px;top:260.56px;font-family:'Liberation Mono', monospace;font-size:16.67px;line-height:20px;color:#262626;">    <span style="color:#8e1010">{</span></div>
<div class="t" style="left:49px;top:280.56px;font-family:'Liberation Mono', monospace;font-size:16.67px;line-height:20px;color:#262626;">.</div>
<div class="t" style="left:79px;top:280.56px;font-family:'Liberation Mono', monospace;font-size:16.67px;line-height:20px;color:#262626;">        strokeFocused<span style="color:#8e1010">(</span>udc<span style="color:#8e1010">,</span> canvas<span style="color:#8e1010">)</span><span style="color:#8e1010">;</span></div>
<div class="t" style="left:49px;top:300.56px;font-family:'Liberation Mono', monospace;font-size:16.67px;line-height:20px;color:#262626;">.</div>
<div class="t" style="left:79px;top:300.56px;font-family:'Liberation Mono', monospace;font-size:16.67px;line-height:20px;color:#262626;">        visit<span style="color:#8e1010">(</span><b style="color:#c41a1a">cast</b><span style="color:#8e1010">(</span><b style="color:#000">UDButton</b><span style="color:#8e1010">)</span> udc<span style="color:#8e1010">)</span><span style="color:#8e1010">;</span></div>
<div class="t" style="left:29px;top:320.56px;font-family:'Liberation Mono', monospace;font-size:16.67px;line-height:20px;color:#262626;">485</div>
<div class="t" style="left:79px;top:320.56px;font-family:'Liberation Mono', monospace;font-size:16.67px;line-height:20px;color:#262626;">        canvas<span style="color:#8e1010">.</span>dra</div>
<div class="t" style="left:49px;top:340.56px;font-family:'Liberation Mono', monospace;font-size:16.67px;line-height:20px;color:#262626;">.</div>
<div class="t" style="left:79px;top:340.56px;font-family:'Liberation Mono', monospace;font-size:16.67px;line-height:20px;color:#262626;">    <span style="color:#8e1010">}</span></div>
<div class="t" style="left:49px;top:360.56px;font-family:'Liberation Mono', monospace;font-size:16.67px;line-height:20px;color:#262626;">.</div>
<div class="t" style="left:79px;top:360.56px;font-family:'Liberation Mono', monospace;font-size:16.67px;line-height:20px;color:#262626;"></div>
<div class="t" style="left:49px;top:380.56px;font-family:'Liberation Mono', monospace;font-size:16.67px;line-height:20px;color:#262626;">.</div>
<div class="t" style="left:79px;top:380.56px;font-family:'Liberation Mono', monospace;font-size:16.67px;line-height:20px;color:#262626;">    <span style="color:#7f7f7f">/// Draws a UDCheckBox.</span></div>
<div class="t" style="left:49px;top:400.56px;font-family:'Liberation Mono', monospace;font-size:16.67px;line-height:20px;color:#262626;">.</div>
<div class="t" style="left:79px;top:400.56px;font-family:'Liberation Mono', monospace;font-size:16.67px;line-height:20px;color:#262626;">    <b style="color:#c41a1a">override</b> <b style="color:#c41a1a">void</b> visit<span style="color:#8e1010">(</span><b style="color:#000">UDCheckBox</b> udc<span style="color:#8e1010">,</span> <b style="color:#c41a1a">ref</b> <b style="color:#000">Canvas</b> canvas<span style="color:#8e1010">)</span></div>
<div class="t" style="left:29px;top:420.56px;font-family:'Liberation Mono', monospace;font-size:16.67px;line-height:20px;color:#262626;">490</div>
<div class="t" style="left:79px;top:420.56px;font-family:'Liberation Mono', monospace;font-size:16.67px;line-height:20px;color:#262626;">    <span style="color:#8e1010">{</span></div>
<div class="t" style="left:49px;top:440.56px;font-family:'Liberation Mono', monospace;font-size:16.67px;line-height:20px;color:#262626;">.</div>
<div class="t" style="left:79px;top:440.56px;font-family:'Liberation Mono', monospace;font-size:16.67px;line-height:20px;color:#262626;">        strokeFocused<span style="color:#8e1010">(</span>udc<span style="color:#8e1010">,</span> canvas<span style="color:#8e1010">)</span><span style="color:#8e1010">;</span></div>
<div class="t" style="left:49px;top:460.56px;font-family:'Liberation Mono', monospace;font-size:16.67px;line-height:20px;color:#262626;">.</div>
<div class="t" style="left:79px;top:460.56px;font-family:'Liberation Mono', monospace;font-size:16.67px;line-height:20px;color:#262626;">        <b style="color:#000">Rect</b> rc <span style="color:#8e1010">=</span> udc<span style="color:#8e1010">.</span>boundingBox<span style="color:#8e1010">;</span></div>
<div class="t" style="left:49px;top:480.56px;font-family:'Liberation Mono', monospace;font-size:16.67px;line-height:20px;color:#262626;">.</div>
<div class="t" style="left:79px;top:480.56px;font-family:'Liberation Mono', monospace;font-size:16.67px;line-height:20px;color:#262626;">        <b style="color:#c41a1a">double</b> ratio <span style="color:#8e1010">=</span> 0<span style="color:#8e1010">.</span>25<span style="color:#8e1010">;</span></div>
<div class="t" style="left:49px;top:500.56px;font-family:'Liberation Mono', monospace;font-size:16.67px;line-height:20px;color:#262626;">.</div>
<div class="t" style="left:79px;top:500.56px;font-family:'Liberation Mono', monospace;font-size:16.67px;line-height:20px;color:#262626;">        rc<span style="color:#8e1010">.</span>height <span style="color:#8e1010">=</span> rc<span style="color:#8e1010">.</span>height * ratio<span style="color:#8e1010">;</span></div>
<div class="t" style="left:29px;top:520.56px;font-family:'Liberation Mono', monospace;font-size:16.67px;line-height:20px;color:#262626;">495</div>
<div class="t" style="left:79px;top:520.56px;font-family:'Liberation Mono', monospace;font-size:16.67px;line-height:20px;color:#262626;">        rc<span style="color:#8e1010">.</span>width <span style="color:#8e1010">=</span> rc<span style="color:#8e1010">.</span>height<span style="color:#8e1010">;</span></div>
<div class="t" style="left:49px;top:540.56px;font-family:'Liberation Mono', monospace;font-size:16.67px;line-height:20px;color:#262626;">.</div>
<div class="t" style="left:79px;top:540.56px;font-family:'Liberation Mono', monospace;font-size:16.67px;line-height:20px;color:#262626;"></div>
<div class="t" style="left:49px;top:560.56px;font-family:'Liberation Mono', monospace;font-size:16.67px;line-height:20px;color:#262626;">.</div>
<div class="t" style="left:79px;top:560.56px;font-family:'Liberation Mono', monospace;font-size:16.67px;line-height:20px;color:#262626;">        canvas<span style="color:#8e1010">.</span>beginPath<span style="color:#8e1010">;</span></div>
<div class="t" style="left:49px;top:580.56px;font-family:'Liberation Mono', monospace;font-size:16.67px;line-height:20px;color:#262626;">.</div>
<div class="t" style="left:79px;top:580.56px;font-family:'Liberation Mono', monospace;font-size:16.67px;line-height:20px;color:#262626;">        canvas<span style="color:#8e1010">.</span>rectangle<span style="color:#8e1010">(</span>rc<span style="color:#8e1010">)</span><span style="color:#8e1010">;</span></div>
<div class="t" style="left:49px;top:600.56px;font-family:'Liberation Mono', monospace;font-size:16.67px;line-height:20px;color:#262626;">.</div>
<div class="t" style="left:79px;top:600.56px;font-family:'Liberation Mono', monospace;font-size:16.67px;line-height:20px;color:#262626;">        <b style="color:#c41a1a">if</b> <span style="color:#8e1010">(</span><span style="color:#8e1010">!</span>udc<span style="color:#8e1010">.</span>checked<span style="color:#8e1010">)</span></div>
<div class="t" style="left:29px;top:620.56px;font-family:'Liberation Mono', monospace;font-size:16.67px;line-height:20px;color:#262626;">500</div>
<div class="t" style="left:79px;top:620.56px;font-family:'Liberation Mono', monospace;font-size:16.67px;line-height:20px;color:#262626;"></div>
<div style="left:159px;top:180px;width:31px;height:20px;border:1px solid #000;"></div>
<div class="t" style="left:159px;top:181.56px;font-family:'Liberation Mono', monospace;font-size:16.67px;line-height:20px;color:#262626;">...</div>
<div style="left:229px;top:320px;width:30px;height:20px;border:1px solid #a8a8a8;"></div>
</div>
<div style="left:1523px;top:114px;width:15px;height:627px;border:1px solid #9e9a96;border-radius:4px;background:#d4d3d1;"></div>
<div style="left:1523px;top:299px;width:15px;height:30px;border:1px solid #5a80b6;background:linear-gradient(to right,#a8c6ec,#86acdc);"></div>
<div style="left:1523px;top:114px;width:15px;height:15px;border:1px solid #8f8b87;border-radius:4px 4px 0 0;background:linear-gradient(to right,#fbfbfa,#e4e3e1);"></div>
<div style="left:1523px;top:726px;width:15px;height:15px;border:1px solid #8f8b87;border-radius:0 0 4px 4px;background:linear-gradient(to right,#fbfbfa,#e4e3e1);"></div>
<svg style="left:1523px;top:114px" width="15" height="15"><path d="M4.0 9.2L7.5 5.7L11.0 9.2" stroke="#222" stroke-width="1.5" fill="none"/></svg>
<svg style="left:1523px;top:726px" width="15" height="15"><path d="M4.0 5.8L7.5 9.3L11.0 5.8" stroke="#222" stroke-width="1.6" fill="none"/></svg>
<svg style="left:1523px;top:310.0px" width="15" height="8"><path d="M5.0 1.5h5M5.0 4h5M5.0 6.5h5" stroke="#46628e" stroke-width="1"/></svg>
<div style="left:347px;top:744px;width:1173px;height:15px;border:1px solid #9e9a96;border-radius:4px;background:#d4d3d1;"></div>
<div style="left:362px;top:744px;width:1143px;height:15px;border:1px solid #5a80b6;background:linear-gradient(#b3cff0,#a2c1ea 12%,#88acdb 88%,#98b8e3);"></div>
<div style="left:347px;top:744px;width:15px;height:15px;border:1px solid #8f8b87;border-radius:4px 0 0 4px;background:linear-gradient(#fbfbfa,#e4e3e1);"></div>
<div style="left:1505px;top:744px;width:15px;height:15px;border:1px solid #8f8b87;border-radius:0 4px 4px 0;background:linear-gradient(#fbfbfa,#e4e3e1);"></div>
<svg style="left:347px;top:744px" width="15" height="15"><path d="M9 4.0L5.7 7.5L9 11.0" stroke="#a29e9a" stroke-width="1.3" fill="none"/></svg>
<svg style="left:1505px;top:744px" width="15" height="15"><path d="M6.2 4.0L9.5 7.5L6.2 11.0" stroke="#a29e9a" stroke-width="1.5" fill="none"/></svg>
<svg style="left:929.5px;top:744px" width="8" height="15"><path d="M1.5 5.0v5M4 5.0v5M6.5 5.0v5" stroke="#46628e" stroke-width="1"/></svg>
<div style="left:347px;top:759px;width:1191px;height:22px;background:#ebeae8;border-top:1px solid #f9f8f6;border-bottom:1px solid #f4f3f1;"></div>
<div class="t" style="left:349.5px;top:760.65px;font-size:14px;line-height:18px;color:#111;letter-spacing:0.185px;">485 : 19 | 0</div>
<div class="t" style="left:464.5px;top:760.65px;font-size:14px;line-height:18px;color:#111;letter-spacing:-0.555px;">MODIFIED</div>
<div class="t" style="left:549px;top:760.65px;font-size:14px;line-height:18px;color:#111;letter-spacing:0.334px;">no macro</div>
<div class="t" style="left:674px;top:760.65px;font-size:14px;line-height:18px;color:#111;letter-spacing:0.314px;">/home/basile/dev/projects/kheops/src/kheops/udcontrols.d</div>
<svg style="position:absolute;left:919px;top:783px" width="47" height="6"><defs><pattern id="dp919_783" x="0" y="0" width="4" height="4" patternUnits="userSpaceOnUse"><rect x="2" y="0" width="1" height="1" fill="#9c9894"/><rect x="0" y="2" width="1" height="1" fill="#9c9894"/></pattern></defs><rect x="0" y="0" width="47" height="5" fill="url(#dp919_783)"/></svg>
<div style="left:424px;top:790px;width:120px;height:26px;border:1px solid #a29e9a;border-bottom:none;border-radius:3px 3px 0 0;background:linear-gradient(#ebeae8,#d3d1ce);"></div>
<div class="t" style="left:430.5px;top:794.15px;font-size:14px;line-height:18px;color:#111;letter-spacing:0.342px;">Library manager</div>
<div style="left:543px;top:790px;width:67px;height:26px;border:1px solid #a29e9a;border-bottom:none;border-radius:3px 3px 0 0;background:linear-gradient(#ebeae8,#d3d1ce);"></div>
<div class="t" style="left:550px;top:794.15px;font-size:14px;line-height:18px;color:#111;letter-spacing:0.516px;">Todo list</div>
<div style="left:609px;top:790px;width:69px;height:26px;border:1px solid #a29e9a;border-bottom:none;border-radius:3px 3px 0 0;background:linear-gradient(#ebeae8,#d3d1ce);"></div>
<div class="t" style="left:615.5px;top:794.15px;font-size:14px;line-height:18px;color:#111;letter-spacing:0.639px;">Terminal</div>
<div style="left:347px;top:815px;width:1191px;height:226px;border:1px solid #a8a4a0;border-radius:0 3px 3px 3px;background:#f2f1ef;"></div>
<div style="left:347px;top:786px;width:78px;height:30px;border:1px solid #6d8fbd;border-bottom:none;border-radius:4px 4px 0 0;background:linear-gradient(#fdfdfc,#f2f1ef 60%);"></div>
<div style="left:347px;top:786px;width:78px;height:5px;border:1px solid #4a74a9;border-bottom:1px solid #7092c0;border-radius:4px 4px 0 0;background:linear-gradient(#abcaef,#92b6e4);"></div>
<div class="t" style="left:354.5px;top:791.65px;font-size:14px;line-height:18px;color:#111;letter-spacing:0.027px;">Messages</div>
<div style="left:348px;top:815px;width:76px;height:2px;background:#f2f1ef;"></div>
<svg style="left:360px;top:826px" width="19" height="18"><path d="M11 7L16 2L17.5 3.5L12.5 8.5Z" fill="#c9883a" stroke="#8a5a20" stroke-width="0.6"/><path d="M9.5 5.5L13.5 9.5L11.5 11.5L7.5 7.5Z" fill="#6a8ab0" stroke="#44607f" stroke-width="0.6"/><path d="M7.5 7.5L11.5 11.5L6 17L1 12Z" fill="#e2c06a" stroke="#a8843a" stroke-width="0.7"/><path d="M3 13.5L6.5 10M4.5 15L8 11.5" stroke="#b08c42" stroke-width="0.7"/></svg>
<div style="left:383px;top:822px;width:1px;height:28px;background:linear-gradient(rgba(190,187,183,0.3),#c0bdb9 12%,#c0bdb9 88%,rgba(190,187,183,0.3));"></div>
<div style="left:416px;top:822px;width:1px;height:28px;background:linear-gradient(rgba(190,187,183,0.3),#c0bdb9 12%,#c0bdb9 88%,rgba(190,187,183,0.3));"></div>
<div style="left:467px;top:822px;width:1px;height:28px;background:linear-gradient(rgba(190,187,183,0.3),#c0bdb9 12%,#c0bdb9 88%,rgba(190,187,183,0.3));"></div>
<div style="left:525px;top:822px;width:1px;height:28px;background:linear-gradient(rgba(190,187,183,0.3),#c0bdb9 12%,#c0bdb9 88%,rgba(190,187,183,0.3));"></div>
<div style="left:611px;top:822px;width:1px;height:28px;background:linear-gradient(rgba(190,187,183,0.3),#c0bdb9 12%,#c0bdb9 88%,rgba(190,187,183,0.3));"></div>
<div style="left:653px;top:822px;width:1px;height:28px;background:linear-gradient(rgba(190,187,183,0.3),#c0bdb9 12%,#c0bdb9 88%,rgba(190,187,183,0.3));"></div>
<div class="t" style="left:393px;top:826.15px;font-size:14px;line-height:18px;color:#111;letter-spacing:0.479px;">All</div>
<div class="t" style="left:425.5px;top:826.15px;font-size:14px;line-height:18px;color:#111;letter-spacing:0.24px;">Editor</div>
<div style="left:472px;top:822px;width:53px;height:28px;border:1px solid #9c9894;border-radius:4px;background:linear-gradient(#dedcd9,#cfccc8);"></div>
<div class="t" style="left:477px;top:826.15px;font-size:14px;line-height:18px;color:#111;letter-spacing:0.205px;">Project</div>
<div class="t" style="left:534.5px;top:826.15px;font-size:14px;line-height:18px;color:#111;letter-spacing:0.412px;">Application</div>
<div class="t" style="left:620.5px;top:826.15px;font-size:14px;line-height:18px;color:#111;letter-spacing:0.059px;">Misc</div>
<div style="left:891px;top:824px;width:611px;height:26px;border:1px solid #76726e;border-top-color:#6e6a66;border-radius:3px;background:#fff;"></div>
<div class="t" style="left:896px;top:826.65px;font-size:14px;line-height:18px;color:#a09c98;letter-spacing:0.656px;">(filter)</div>
<svg style="left:1504px;top:824px" width="28" height="28"><defs><linearGradient id="cfg" x1="0" y1="0" x2="0" y2="1"><stop offset="0" stop-color="#fafafa"/><stop offset="1" stop-color="#c8c8c8"/></linearGradient></defs><path d="M6.5 7.5Q6.5 6.3 8 6.3H18.6Q20 6.3 20 7.5V10L14.2 15.2V20.5L12.2 19V15.2L6.5 10Z" fill="url(#cfg)" stroke="#6a6a6a" stroke-width="0.9" stroke-linejoin="round"/><path d="M8.3 8.6H17.8" stroke="#555" stroke-width="1.1"/><path d="M14.6 13.6L21.6 20.6M20.6 13.2L15 20.5" stroke="#333" stroke-width="1.2"/></svg>
<div style="left:352px;top:856px;width:1163px;height:166px;background:#fff;border:1px solid #a8a4a0;"></div>
<div style="left:353px;top:857px;width:1161px;height:22px;background:#a7cff8;"></div>
<svg style="left:354.5px;top:859.5px" width="16" height="16"><defs><radialGradient id="ig" cx="0.45" cy="0.3" r="0.7"><stop offset="0" stop-color="#9cc8f0"/><stop offset="1" stop-color="#2f74c0"/></radialGradient></defs><circle cx="8" cy="8" r="7.2" fill="url(#ig)" stroke="#2a5fa0" stroke-width="0.9"/><rect x="7" y="6.8" width="2.2" height="5.2" fill="#fff"/><rect x="7" y="3.6" width="2.2" height="2" fill="#fff"/><rect x="6" y="11.2" width="4.2" height="1.1" fill="#fff"/></svg>
<div class="t" style="left:376.5px;top:858.31px;font-family:'Liberation Mono', monospace;font-size:15px;line-height:20px;color:#111;font-weight:bold;">compiling /.../kheops/kheops.ce</div>
<div style="left:353px;top:879px;width:1161px;height:22px;background:#a7cff8;"></div>
<svg style="left:354.5px;top:881.5px" width="16" height="16"><defs><radialGradient id="ig" cx="0.45" cy="0.3" r="0.7"><stop offset="0" stop-color="#9cc8f0"/><stop offset="1" stop-color="#2f74c0"/></radialGradient></defs><circle cx="8" cy="8" r="7.2" fill="url(#ig)" stroke="#2a5fa0" stroke-width="0.9"/><rect x="7" y="6.8" width="2.2" height="5.2" fill="#fff"/><rect x="7" y="3.6" width="2.2" height="2" fill="#fff"/><rect x="6" y="11.2" width="4.2" height="1.1" fill="#fff"/></svg>
<div class="t" style="left:376.5px;top:880.31px;font-family:'Liberation Mono', monospace;font-size:15px;line-height:20px;color:#111;font-weight:bold;">using /usr/bin/dmd (dmd)</div>
<div style="left:353px;top:901px;width:1161px;height:22px;background:#e7b4b4;"></div>
<svg style="left:354.5px;top:903.5px" width="16" height="16"><defs><radialGradient id="eg" cx="0.45" cy="0.3" r="0.7"><stop offset="0" stop-color="#ff9a80"/><stop offset="1" stop-color="#d9301a"/></radialGradient></defs><circle cx="8" cy="8" r="7.2" fill="url(#eg)" stroke="#b02810" stroke-width="0.9"/><rect x="6.9" y="3.2" width="2.3" height="6.3" fill="#fff"/><rect x="6.9" y="10.8" width="2.3" height="2.2" fill="#fff"/></svg>
<div class="t" style="left:376.5px;top:902.31px;font-family:'Liberation Mono', monospace;font-size:15px;line-height:20px;color:#111;font-weight:bold;">/usr/include/dmd/druntime/import/core/exception.d(686): _store is thread local</div>
<div style="left:353px;top:923px;width:1161px;height:22px;background:#a7cff8;"></div>
<svg style="left:354.5px;top:925.5px" width="16" height="16"><defs><radialGradient id="ig" cx="0.45" cy="0.3" r="0.7"><stop offset="0" stop-color="#9cc8f0"/><stop offset="1" stop-color="#2f74c0"/></radialGradient></defs><circle cx="8" cy="8" r="7.2" fill="url(#ig)" stroke="#2a5fa0" stroke-width="0.9"/><rect x="7" y="6.8" width="2.2" height="5.2" fill="#fff"/><rect x="7" y="3.6" width="2.2" height="2" fill="#fff"/><rect x="6" y="11.2" width="4.2" height="1.1" fill="#fff"/></svg>
<div class="t" style="left:376.5px;top:924.31px;font-family:'Liberation Mono', monospace;font-size:15px;line-height:20px;color:#111;font-weight:bold;">/home/basile/dev/projects/kheops/kheops.ce has been successfully compiled</div>
<div style="left:353px;top:945px;width:1161px;height:22px;background:#a7cff8;"></div>
<svg style="left:354.5px;top:947.5px" width="16" height="16"><defs><radialGradient id="ig" cx="0.45" cy="0.3" r="0.7"><stop offset="0" stop-color="#9cc8f0"/><stop offset="1" stop-color="#2f74c0"/></radialGradient></defs><circle cx="8" cy="8" r="7.2" fill="url(#ig)" stroke="#2a5fa0" stroke-width="0.9"/><rect x="7" y="6.8" width="2.2" height="5.2" fill="#fff"/><rect x="7" y="3.6" width="2.2" height="2" fill="#fff"/><rect x="6" y="11.2" width="4.2" height="1.1" fill="#fff"/></svg>
<div class="t" style="left:376.5px;top:946.31px;font-family:'Liberation Mono', monospace;font-size:15px;line-height:20px;color:#111;font-weight:bold;">Build duration: 00:00:04</div>
<div style="left:1518px;top:856px;width:15px;height:166px;border:1px solid #9e9a96;border-radius:4px;background:#d4d3d1;"></div>
<div style="left:1518px;top:871px;width:15px;height:136px;border:1px solid #5a80b6;background:linear-gradient(to right,#a8c6ec,#86acdc);"></div>
<div style="left:1518px;top:856px;width:15px;height:15px;border:1px solid #8f8b87;border-radius:4px 4px 0 0;background:linear-gradient(to right,#fbfbfa,#e4e3e1);"></div>
<div style="left:1518px;top:1007px;width:15px;height:15px;border:1px solid #8f8b87;border-radius:0 0 4px 4px;background:linear-gradient(to right,#fbfbfa,#e4e3e1);"></div>
<svg style="left:1518px;top:856px" width="15" height="15"><path d="M4.0 9.2L7.5 5.7L11.0 9.2" stroke="#a29e9a" stroke-width="1.5" fill="none"/></svg>
<svg style="left:1518px;top:1007px" width="15" height="15"><path d="M4.0 5.8L7.5 9.3L11.0 5.8" stroke="#a29e9a" stroke-width="1.6" fill="none"/></svg>
<svg style="left:1518px;top:935.0px" width="15" height="8"><path d="M5.0 1.5h5M5.0 4h5M5.0 6.5h5" stroke="#46628e" stroke-width="1"/></svg>
<div style="left:352px;top:1024px;width:1163px;height:15px;border:1px solid #9e9a96;border-radius:4px;background:#d4d3d1;"></div>
<div style="left:366px;top:1024px;width:1134px;height:15px;border:1px solid #5a80b6;background:linear-gradient(#b3cff0,#a2c1ea 12%,#88acdb 88%,#98b8e3);"></div>
<div style="left:352px;top:1024px;width:15px;height:15px;border:1px solid #8f8b87;border-radius:4px 0 0 4px;background:linear-gradient(#fbfbfa,#e4e3e1);"></div>
<div style="left:1500px;top:1024px;width:15px;height:15px;border:1px solid #8f8b87;border-radius:0 4px 4px 0;background:linear-gradient(#fbfbfa,#e4e3e1);"></div>
<svg style="left:352px;top:1024px" width="15" height="15"><path d="M9 4.0L5.7 7.5L9 11.0" stroke="#a29e9a" stroke-width="1.3" fill="none"/></svg>
<svg style="left:1500px;top:1024px" width="15" height="15"><path d="M6.2 4.0L9.5 7.5L6.2 11.0" stroke="#a29e9a" stroke-width="1.5" fill="none"/></svg>
<svg style="left:929.0px;top:1024px" width="8" height="15"><path d="M1.5 5.0v5M4 5.0v5M6.5 5.0v5" stroke="#46628e" stroke-width="1"/></svg>
<div style="left:0px;top:1041px;width:1919px;height:3px;background:linear-gradient(#d8d6d3,#6a6663);"></div>
<div style="left:1542px;top:88px;width:377px;height:409px;border:1px solid #a8a4a0;border-radius:0 3px 3px 3px;background:#f2f1ef;"></div>
<div style="left:1664px;top:62px;width:134px;height:27px;border:1px solid #a29e9a;border-bottom:none;border-radius:3px 3px 0 0;background:linear-gradient(#ebeae8,#d3d1ce);"></div>
<div class="t" style="left:1670.5px;top:66.65px;font-size:14px;line-height:18px;color:#111;letter-spacing:0.314px;">DUB project editor</div>
<div style="left:1542px;top:59px;width:123px;height:30px;border:1px solid #6d8fbd;border-bottom:none;border-radius:4px 4px 0 0;background:linear-gradient(#fdfdfc,#f2f1ef 60%);"></div>
<div style="left:1542px;top:59px;width:123px;height:5px;border:1px solid #4a74a9;border-bottom:1px solid #7092c0;border-radius:4px 4px 0 0;background:linear-gradient(#abcaef,#92b6e4);"></div>
<div class="t" style="left:1549.5px;top:65.15px;font-size:14px;line-height:18px;color:#111;letter-spacing:0.28px;">Project inspector</div>
<div style="left:1543px;top:88px;width:121px;height:2px;background:#f2f1ef;"></div>
<svg style="left:1554px;top:98px" width="23" height="23"><defs><linearGradient id="rfg" x1="0" y1="0" x2="0" y2="1"><stop offset="0" stop-color="#4a9ae0"/><stop offset="1" stop-color="#a0dafe"/></linearGradient></defs><path d="M3.3 4.2H8.8V9.8L7.2 8.4Q6.6 12.6 9.8 14.3V18Q3.6 16.8 3.6 10.2V6.6Z" fill="url(#rfg)" stroke="#2f7bc8" stroke-width="0.9" stroke-linejoin="round"/><path d="M19.2 18H13.7V12.4L15.3 13.8Q15.9 9.6 12.7 7.9V4.2Q18.9 5.4 18.9 12V15.6Z" fill="url(#rfg)" stroke="#2f7bc8" stroke-width="0.9" stroke-linejoin="round"/></svg>
<div style="left:1578px;top:95px;width:28px;height:28px;border:1px solid #9c9894;border-radius:4px;background:linear-gradient(#dedcd9,#cfccc8);"></div>
<svg style="left:1583px;top:100px" width="18" height="18"><path d="M4 6v8.5h6M4 9.5h6" stroke="#8a8a8a" stroke-width="1" fill="none"/><path d="M0.5 1.5h3l1 1h4.5v4.5h-8.5Z" fill="#f0c060" stroke="#c89030" stroke-width="0.7"/><path d="M8.5 6.5h3l1 1h4.5v4h-8.5Z" fill="#f0c060" stroke="#c89030" stroke-width="0.7"/><path d="M8.5 12.5h3l1 1h4.5v4h-8.5Z" fill="#f0c060" stroke="#c89030" stroke-width="0.7"/></svg>
<svg style="left:1612px;top:100px" width="17" height="17"><path d="M1.5 0.5h8l3.5 3.5v11.5h-11.5Z" fill="url(#docg)" stroke="#b2b2b2" stroke-width="0.9"/><path d="M9.5 0.5v3.5h3.5" fill="none" stroke="#b2b2b2" stroke-width="0.9"/><circle cx="12" cy="12.5" r="3.6" fill="#5aa620" stroke="#3f7f12" stroke-width="0.6"/><path d="M9.9 12.5h4.2M12 10.4v4.2" stroke="#fff" stroke-width="1.4"/></svg>
<svg style="left:1640px;top:100px" width="17" height="17"><path d="M1.5 0.5h8l3.5 3.5v11.5h-11.5Z" fill="url(#docg)" stroke="#b2b2b2" stroke-width="0.9"/><path d="M9.5 0.5v3.5h3.5" fill="none" stroke="#b2b2b2" stroke-width="0.9"/><circle cx="12" cy="12.5" r="3.6" fill="#e23a28" stroke="#a82015" stroke-width="0.6"/><path d="M9.9 12.5h4.2" stroke="#fff" stroke-width="1.5"/></svg>
<svg style="left:1668px;top:100px" width="17" height="16"><path d="M1 2.5h5l1.5 1.5h7v9.5H1Z" fill="#e8b04a" stroke="#c48a2a" stroke-width="0.8"/><path d="M3 6.5h12.5l-2 7H1Z" fill="url(#fg)" stroke="#c89434" stroke-width="0.8"/><defs><linearGradient id="fg" x1="0" y1="0" x2="0" y2="1"><stop offset="0" stop-color="#fff2c2"/><stop offset="1" stop-color="#f2c868"/></linearGradient></defs><circle cx="13" cy="12.5" r="3.6" fill="#5aa620" stroke="#3f7f12" stroke-width="0.6"/><path d="M10.9 12.5h4.2M13 10.4v4.2" stroke="#fff" stroke-width="1.4"/></svg>
<svg style="left:1696px;top:100px" width="17" height="16"><path d="M1 2.5h5l1.5 1.5h7v9.5H1Z" fill="#e8b04a" stroke="#c48a2a" stroke-width="0.8"/><path d="M3 6.5h12.5l-2 7H1Z" fill="url(#fg)" stroke="#c89434" stroke-width="0.8"/><defs><linearGradient id="fg" x1="0" y1="0" x2="0" y2="1"><stop offset="0" stop-color="#fff2c2"/><stop offset="1" stop-color="#f2c868"/></linearGradient></defs><circle cx="13" cy="12.5" r="3.6" fill="#e23a28" stroke="#a82015" stroke-width="0.6"/><path d="M10.9 12.5h4.2" stroke="#fff" stroke-width="1.5"/></svg>
<div style="left:1727px;top:98px;width:151px;height:24px;border:1px solid #76726e;border-top-color:#6e6a66;border-radius:3px;background:#fff;"></div>
<div class="t" style="left:1731.5px;top:101.15px;font-size:14px;line-height:18px;color:#a09c98;letter-spacing:0.656px;">(filter)</div>
<svg style="left:1883px;top:96px" width="28" height="28"><defs><linearGradient id="cfg" x1="0" y1="0" x2="0" y2="1"><stop offset="0" stop-color="#fafafa"/><stop offset="1" stop-color="#c8c8c8"/></linearGradient></defs><path d="M6.5 7.5Q6.5 6.3 8 6.3H18.6Q20 6.3 20 7.5V10L14.2 15.2V20.5L12.2 19V15.2L6.5 10Z" fill="url(#cfg)" stroke="#6a6a6a" stroke-width="0.9" stroke-linejoin="round"/><path d="M8.3 8.6H17.8" stroke="#555" stroke-width="1.1"/><path d="M14.6 13.6L21.6 20.6M20.6 13.2L15 20.5" stroke="#333" stroke-width="1.2"/></svg>
<div style="left:1547px;top:129px;width:351px;height:363px;background:#fff;border:1px solid #a8a4a0;"></div>
<div style="left:1560px;top:150px;width:1px;height:6px;background:repeating-linear-gradient(#6d8fd0 0 1px,transparent 1px 2px);"></div>
<div style="left:1576px;top:170px;width:1px;height:44px;background:repeating-linear-gradient(#6d8fd0 0 1px,transparent 1px 2px);"></div>
<div style="left:1592px;top:230px;width:1px;height:261px;background:repeating-linear-gradient(#6d8fd0 0 1px,transparent 1px 2px);"></div>
<svg style="left:1552px;top:131px" width="18" height="18"><path d="M1.5 1.5h6l2 2v8h-8Z" fill="#f4f4f4" stroke="#bdbdbd" stroke-width="0.9"/><path d="M3.5 3.5h6l2 2v8h-8Z" fill="#f4f4f4" stroke="#bdbdbd" stroke-width="0.9"/><path d="M6.5 5.5h6l3 3v8h-9Z" fill="#f6f6f6" stroke="#b0b0b0" stroke-width="0.9"/></svg>
<div class="t" style="left:1574.5px;top:130.15px;font-size:14px;line-height:18px;color:#111;letter-spacing:0.24px;">Source files</div>
<svg style="left:1554.5px;top:157px" width="12" height="8"><path d="M0.8 1.3H11.2L6 6.8Z" stroke="#000" stroke-width="1.25" fill="none" stroke-linejoin="miter"/></svg>
<div style="left:1567px;top:160px;width:1px;height:1px;background:#6d8fd0;"></div>
<svg style="left:1569px;top:152px" width="17" height="16"><path d="M1 2.5h5l1.5 1.5h7v9.5H1Z" fill="#e8b04a" stroke="#c48a2a" stroke-width="0.8"/><path d="M3 6.5h12.5l-2 7H1Z" fill="url(#fg)" stroke="#c89434" stroke-width="0.8"/><defs><linearGradient id="fg" x1="0" y1="0" x2="0" y2="1"><stop offset="0" stop-color="#fff2c2"/><stop offset="1" stop-color="#f2c868"/></linearGradient></defs></svg>
<div class="t" style="left:1590.5px;top:150.15px;font-size:14px;line-height:18px;color:#111;letter-spacing:0.115px;">src</div>
<svg style="left:1573px;top:174.5px" width="8" height="12"><path d="M1.3 0.8V11.2L6.8 6Z" stroke="#000" stroke-width="1.25" fill="none"/></svg>
<div style="left:1583px;top:180px;width:1px;height:1px;background:#6d8fd0;"></div>
<svg style="left:1585px;top:172px" width="17" height="16"><path d="M1 2.5h5l1.5 1.5h7v9.5H1Z" fill="#e8b04a" stroke="#c48a2a" stroke-width="0.8"/><path d="M3 6.5h12.5l-2 7H1Z" fill="url(#fg)" stroke="#c89434" stroke-width="0.8"/><defs><linearGradient id="fg" x1="0" y1="0" x2="0" y2="1"><stop offset="0" stop-color="#fff2c2"/><stop offset="1" stop-color="#f2c868"/></linearGradient></defs></svg>
<div class="t" style="left:1606.5px;top:170.15px;font-size:14px;line-height:18px;color:#111;letter-spacing:0.334px;">cairo</div>
<svg style="left:1573px;top:194.5px" width="8" height="12"><path d="M1.3 0.8V11.2L6.8 6Z" stroke="#000" stroke-width="1.25" fill="none"/></svg>
<div style="left:1583px;top:200px;width:1px;height:1px;background:#6d8fd0;"></div>
<svg style="left:1585px;top:192px" width="17" height="16"><path d="M1 2.5h5l1.5 1.5h7v9.5H1Z" fill="#e8b04a" stroke="#c48a2a" stroke-width="0.8"/><path d="M3 6.5h12.5l-2 7H1Z" fill="url(#fg)" stroke="#c89434" stroke-width="0.8"/><defs><linearGradient id="fg" x1="0" y1="0" x2="0" y2="1"><stop offset="0" stop-color="#fff2c2"/><stop offset="1" stop-color="#f2c868"/></linearGradient></defs></svg>
<div class="t" style="left:1606.5px;top:190.15px;font-size:14px;line-height:18px;color:#111;letter-spacing:0.555px;">freetype</div>
<svg style="left:1570.5px;top:217px" width="12" height="8"><path d="M0.8 1.3H11.2L6 6.8Z" stroke="#000" stroke-width="1.25" fill="none" stroke-linejoin="miter"/></svg>
<div style="left:1583px;top:220px;width:1px;height:1px;background:#6d8fd0;"></div>
<svg style="left:1585px;top:212px" width="17" height="16"><path d="M1 2.5h5l1.5 1.5h7v9.5H1Z" fill="#e8b04a" stroke="#c48a2a" stroke-width="0.8"/><path d="M3 6.5h12.5l-2 7H1Z" fill="url(#fg)" stroke="#c89434" stroke-width="0.8"/><defs><linearGradient id="fg" x1="0" y1="0" x2="0" y2="1"><stop offset="0" stop-color="#fff2c2"/><stop offset="1" stop-color="#f2c868"/></linearGradient></defs></svg>
<div class="t" style="left:1606.5px;top:210.15px;font-size:14px;line-height:18px;color:#111;letter-spacing:0.312px;">kheops</div>
<div style="left:1594px;top:240px;width:7px;height:1px;background:repeating-linear-gradient(to right,#6d8fd0 0 1px,transparent 1px 2px);"></div>
<svg style="left:1602px;top:232px" width="14" height="16"><path d="M1.5 1.5h7l3.5 3.5v10h-10.5Z" fill="#f4f4f4" stroke="#9e9e9e" stroke-width="0.9"/><path d="M8.5 1.5v3.5h3.5" fill="#e4e4e4" stroke="#9e9e9e" stroke-width="0.8"/><path d="M3.5 5.5h3M3.5 7.5h2.5M7 7.5h3M3.5 9.5h3M7.5 9.5h2.5M3.5 11.5h2M6.5 11.5h3.5M3.5 13.5h3" stroke="#7a7a7a" stroke-width="0.8"/></svg>
<div class="t" style="left:1622.5px;top:230.15px;font-size:14px;line-height:18px;color:#111;letter-spacing:0.332px;">actions.d</div>
<div style="left:1594px;top:260px;width:7px;height:1px;background:repeating-linear-gradient(to right,#6d8fd0 0 1px,transparent 1px 2px);"></div>
<svg style="left:1602px;top:252px" width="14" height="16"><path d="M1.5 1.5h7l3.5 3.5v10h-10.5Z" fill="#f4f4f4" stroke="#9e9e9e" stroke-width="0.9"/><path d="M8.5 1.5v3.5h3.5" fill="#e4e4e4" stroke="#9e9e9e" stroke-width="0.8"/><path d="M3.5 5.5h3M3.5 7.5h2.5M7 7.5h3M3.5 9.5h3M7.5 9.5h2.5M3.5 11.5h2M6.5 11.5h3.5M3.5 13.5h3" stroke="#7a7a7a" stroke-width="0.8"/></svg>
<div class="t" style="left:1622.5px;top:250.15px;font-size:14px;line-height:18px;color:#111;letter-spacing:0.541px;">bitmap.d</div>
<div style="left:1594px;top:280px;width:7px;height:1px;background:repeating-linear-gradient(to right,#6d8fd0 0 1px,transparent 1px 2px);"></div>
<svg style="left:1602px;top:272px" width="14" height="16"><path d="M1.5 1.5h7l3.5 3.5v10h-10.5Z" fill="#f4f4f4" stroke="#9e9e9e" stroke-width="0.9"/><path d="M8.5 1.5v3.5h3.5" fill="#e4e4e4" stroke="#9e9e9e" stroke-width="0.8"/><path d="M3.5 5.5h3M3.5 7.5h2.5M7 7.5h3M3.5 9.5h3M7.5 9.5h2.5M3.5 11.5h2M6.5 11.5h3.5M3.5 13.5h3" stroke="#7a7a7a" stroke-width="0.8"/></svg>
<div class="t" style="left:1622.5px;top:270.15px;font-size:14px;line-height:18px;color:#111;letter-spacing:0.19px;">brush.d</div>
<div style="left:1594px;top:300px;width:7px;height:1px;background:repeating-linear-gradient(to right,#6d8fd0 0 1px,transparent 1px 2px);"></div>
<svg style="left:1602px;top:292px" width="14" height="16"><path d="M1.5 1.5h7l3.5 3.5v10h-10.5Z" fill="#f4f4f4" stroke="#9e9e9e" stroke-width="0.9"/><path d="M8.5 1.5v3.5h3.5" fill="#e4e4e4" stroke="#9e9e9e" stroke-width="0.8"/><path d="M3.5 5.5h3M3.5 7.5h2.5M7 7.5h3M3.5 9.5h3M7.5 9.5h2.5M3.5 11.5h2M6.5 11.5h3.5M3.5 13.5h3" stroke="#7a7a7a" stroke-width="0.8"/></svg>
<div class="t" style="left:1622.5px;top:290.15px;font-size:14px;line-height:18px;color:#111;letter-spacing:0.248px;">canvas.d</div>
<div style="left:1594px;top:320px;width:7px;height:1px;background:repeating-linear-gradient(to right,#6d8fd0 0 1px,transparent 1px 2px);"></div>
<svg style="left:1602px;top:312px" width="14" height="16"><path d="M1.5 1.5h7l3.5 3.5v10h-10.5Z" fill="#f4f4f4" stroke="#9e9e9e" stroke-width="0.9"/><path d="M8.5 1.5v3.5h3.5" fill="#e4e4e4" stroke="#9e9e9e" stroke-width="0.8"/><path d="M3.5 5.5h3M3.5 7.5h2.5M7 7.5h3M3.5 9.5h3M7.5 9.5h2.5M3.5 11.5h2M6.5 11.5h3.5M3.5 13.5h3" stroke="#7a7a7a" stroke-width="0.8"/></svg>
<div class="t" style="left:1622.5px;top:310.15px;font-size:14px;line-height:18px;color:#111;letter-spacing:0.25px;">colors.d</div>
<div style="left:1594px;top:340px;width:7px;height:1px;background:repeating-linear-gradient(to right,#6d8fd0 0 1px,transparent 1px 2px);"></div>
<div style="left:1618px;top:330px;width:65px;height:20px;background:linear-gradient(#7fa7da,#6894cf);"></div>
<svg style="left:1602px;top:332px" width="14" height="16"><path d="M1.5 1.5h7l3.5 3.5v10h-10.5Z" fill="#f4f4f4" stroke="#9e9e9e" stroke-width="0.9"/><path d="M8.5 1.5v3.5h3.5" fill="#e4e4e4" stroke="#9e9e9e" stroke-width="0.8"/><path d="M3.5 5.5h3M3.5 7.5h2.5M7 7.5h3M3.5 9.5h3M7.5 9.5h2.5M3.5 11.5h2M6.5 11.5h3.5M3.5 13.5h3" stroke="#7a7a7a" stroke-width="0.8"/></svg>
<div class="t" style="left:1622.5px;top:330.15px;font-size:14px;line-height:18px;color:#111;letter-spacing:0.37px;">control.d</div>
<svg style="left:1589px;top:354.5px" width="8" height="12"><path d="M1.3 0.8V11.2L6.8 6Z" stroke="#000" stroke-width="1.25" fill="none"/></svg>
<div style="left:1599px;top:360px;width:1px;height:1px;background:#6d8fd0;"></div>
<svg style="left:1601px;top:352px" width="17" height="16"><path d="M1 2.5h5l1.5 1.5h7v9.5H1Z" fill="#e8b04a" stroke="#c48a2a" stroke-width="0.8"/><path d="M3 6.5h12.5l-2 7H1Z" fill="url(#fg)" stroke="#c89434" stroke-width="0.8"/><defs><linearGradient id="fg" x1="0" y1="0" x2="0" y2="1"><stop offset="0" stop-color="#fff2c2"/><stop offset="1" stop-color="#f2c868"/></linearGradient></defs></svg>
<div class="t" style="left:1622.5px;top:350.15px;font-size:14px;line-height:18px;color:#111;letter-spacing:0.375px;">controls</div>
<div style="left:1594px;top:380px;width:7px;height:1px;background:repeating-linear-gradient(to right,#6d8fd0 0 1px,transparent 1px 2px);"></div>
<svg style="left:1602px;top:372px" width="14" height="16"><path d="M1.5 1.5h7l3.5 3.5v10h-10.5Z" fill="#f4f4f4" stroke="#9e9e9e" stroke-width="0.9"/><path d="M8.5 1.5v3.5h3.5" fill="#e4e4e4" stroke="#9e9e9e" stroke-width="0.8"/><path d="M3.5 5.5h3M3.5 7.5h2.5M7 7.5h3M3.5 9.5h3M7.5 9.5h2.5M3.5 11.5h2M6.5 11.5h3.5M3.5 13.5h3" stroke="#7a7a7a" stroke-width="0.8"/></svg>
<div class="t" style="left:1622.5px;top:370.15px;font-size:14px;line-height:18px;color:#111;letter-spacing:0.497px;">font.d</div>
<div style="left:1594px;top:400px;width:7px;height:1px;background:repeating-linear-gradient(to right,#6d8fd0 0 1px,transparent 1px 2px);"></div>
<svg style="left:1602px;top:392px" width="14" height="16"><path d="M1.5 1.5h7l3.5 3.5v10h-10.5Z" fill="#f4f4f4" stroke="#9e9e9e" stroke-width="0.9"/><path d="M8.5 1.5v3.5h3.5" fill="#e4e4e4" stroke="#9e9e9e" stroke-width="0.8"/><path d="M3.5 5.5h3M3.5 7.5h2.5M7 7.5h3M3.5 9.5h3M7.5 9.5h2.5M3.5 11.5h2M6.5 11.5h3.5M3.5 13.5h3" stroke="#7a7a7a" stroke-width="0.8"/></svg>
<div class="t" style="left:1622.5px;top:390.15px;font-size:14px;line-height:18px;color:#111;letter-spacing:0.487px;">fontloader.d</div>
<div style="left:1594px;top:420px;width:7px;height:1px;background:repeating-linear-gradient(to right,#6d8fd0 0 1px,transparent 1px 2px);"></div>
<svg style="left:1602px;top:412px" width="14" height="16"><path d="M1.5 1.5h7l3.5 3.5v10h-10.5Z" fill="#f4f4f4" stroke="#9e9e9e" stroke-width="0.9"/><path d="M8.5 1.5v3.5h3.5" fill="#e4e4e4" stroke="#9e9e9e" stroke-width="0.8"/><path d="M3.5 5.5h3M3.5 7.5h2.5M7 7.5h3M3.5 9.5h3M7.5 9.5h2.5M3.5 11.5h2M6.5 11.5h3.5M3.5 13.5h3" stroke="#7a7a7a" stroke-width="0.8"/></svg>
<div class="t" style="left:1622.5px;top:410.15px;font-size:14px;line-height:18px;color:#111;letter-spacing:0.377px;">gradient.d</div>
<svg style="left:1589px;top:434.5px" width="8" height="12"><path d="M1.3 0.8V11.2L6.8 6Z" stroke="#000" stroke-width="1.25" fill="none"/></svg>
<div style="left:1599px;top:440px;width:1px;height:1px;background:#6d8fd0;"></div>
<svg style="left:1601px;top:432px" width="17" height="16"><path d="M1 2.5h5l1.5 1.5h7v9.5H1Z" fill="#e8b04a" stroke="#c48a2a" stroke-width="0.8"/><path d="M3 6.5h12.5l-2 7H1Z" fill="url(#fg)" stroke="#c89434" stroke-width="0.8"/><defs><linearGradient id="fg" x1="0" y1="0" x2="0" y2="1"><stop offset="0" stop-color="#fff2c2"/><stop offset="1" stop-color="#f2c868"/></linearGradient></defs></svg>
<div class="t" style="left:1622.5px;top:430.15px;font-size:14px;line-height:18px;color:#111;letter-spacing:0.301px;">helpers</div>
<div style="left:1594px;top:460px;width:7px;height:1px;background:repeating-linear-gradient(to right,#6d8fd0 0 1px,transparent 1px 2px);"></div>
<svg style="left:1602px;top:452px" width="14" height="16"><path d="M1.5 1.5h7l3.5 3.5v10h-10.5Z" fill="#f4f4f4" stroke="#9e9e9e" stroke-width="0.9"/><path d="M8.5 1.5v3.5h3.5" fill="#e4e4e4" stroke="#9e9e9e" stroke-width="0.8"/><path d="M3.5 5.5h3M3.5 7.5h2.5M7 7.5h3M3.5 9.5h3M7.5 9.5h2.5M3.5 11.5h2M6.5 11.5h3.5M3.5 13.5h3" stroke="#7a7a7a" stroke-width="0.8"/></svg>
<div class="t" style="left:1622.5px;top:450.15px;font-size:14px;line-height:18px;color:#111;letter-spacing:0.443px;">layouts.d</div>
<div style="left:1594px;top:480px;width:7px;height:1px;background:repeating-linear-gradient(to right,#6d8fd0 0 1px,transparent 1px 2px);"></div>
<svg style="left:1602px;top:472px" width="14" height="16"><path d="M1.5 1.5h7l3.5 3.5v10h-10.5Z" fill="#f4f4f4" stroke="#9e9e9e" stroke-width="0.9"/><path d="M8.5 1.5v3.5h3.5" fill="#e4e4e4" stroke="#9e9e9e" stroke-width="0.8"/><path d="M3.5 5.5h3M3.5 7.5h2.5M7 7.5h3M3.5 9.5h3M7.5 9.5h2.5M3.5 11.5h2M6.5 11.5h3.5M3.5 13.5h3" stroke="#7a7a7a" stroke-width="0.8"/></svg>
<div class="t" style="left:1622.5px;top:470.15px;font-size:14px;line-height:18px;color:#111;letter-spacing:0.386px;">pathdata.d</div>
<div style="left:1900px;top:130px;width:15px;height:362px;border:1px solid #9e9a96;border-radius:4px;background:#d4d3d1;"></div>
<div style="left:1900px;top:144px;width:15px;height:209px;border:1px solid #5a80b6;background:linear-gradient(to right,#a8c6ec,#86acdc);"></div>
<div style="left:1900px;top:130px;width:15px;height:15px;border:1px solid #8f8b87;border-radius:4px 4px 0 0;background:linear-gradient(to right,#fbfbfa,#e4e3e1);"></div>
<div style="left:1900px;top:477px;width:15px;height:15px;border:1px solid #8f8b87;border-radius:0 0 4px 4px;background:linear-gradient(to right,#fbfbfa,#e4e3e1);"></div>
<svg style="left:1900px;top:130px" width="15" height="15"><path d="M4.0 9.2L7.5 5.7L11.0 9.2" stroke="#a29e9a" stroke-width="1.5" fill="none"/></svg>
<svg style="left:1900px;top:477px" width="15" height="15"><path d="M4.0 5.8L7.5 9.3L11.0 5.8" stroke="#222" stroke-width="1.6" fill="none"/></svg>
<svg style="left:1900px;top:244.5px" width="15" height="8"><path d="M5.0 1.5h5M5.0 4h5M5.0 6.5h5" stroke="#46628e" stroke-width="1"/></svg>
<svg style="position:absolute;left:1708px;top:497px" width="47" height="6"><defs><pattern id="dp1708_497" x="0" y="0" width="4" height="4" patternUnits="userSpaceOnUse"><rect x="2" y="0" width="1" height="1" fill="#9c9894"/><rect x="0" y="2" width="1" height="1" fill="#9c9894"/></pattern></defs><rect x="0" y="0" width="47" height="5" fill="url(#dp1708_497)"/></svg>
<div style="left:1542px;top:500px;width:377px;height:20px;background:#ecebe9;"></div>
<svg style="position:absolute;left:1546px;top:508px" width="136" height="6"><defs><pattern id="dp1546_508" x="0" y="0" width="4" height="4" patternUnits="userSpaceOnUse"><rect x="2" y="0" width="1" height="1" fill="#9c9894"/><rect x="0" y="2" width="1" height="1" fill="#9c9894"/></pattern></defs><rect x="0" y="0" width="136" height="5" fill="url(#dp1546_508)"/></svg>
<svg style="position:absolute;left:1773px;top:508px" width="133" height="6"><defs><pattern id="dp1773_508" x="0" y="0" width="4" height="4" patternUnits="userSpaceOnUse"><rect x="2" y="0" width="1" height="1" fill="#9c9894"/><rect x="0" y="2" width="1" height="1" fill="#9c9894"/></pattern></defs><rect x="0" y="0" width="133" height="5" fill="url(#dp1773_508)"/></svg>
<div class="t" style="left:1684.5px;top:501.65px;font-size:14px;line-height:18px;color:#111;letter-spacing:0.213px;">Project group</div>
<svg style="position:absolute;left:1910px;top:506px" width="9" height="9"><path d="M1 1L8 8M8 1L1 8" stroke="#000" stroke-width="2.2"/></svg>
<svg style="left:1553px;top:530px" width="17" height="17"><path d="M1.5 0.5h8l3.5 3.5v11.5h-11.5Z" fill="url(#docg)" stroke="#b2b2b2" stroke-width="0.9"/><path d="M9.5 0.5v3.5h3.5" fill="none" stroke="#b2b2b2" stroke-width="0.9"/><circle cx="12" cy="12.5" r="3.6" fill="#5aa620" stroke="#3f7f12" stroke-width="0.6"/><path d="M9.9 12.5h4.2M12 10.4v4.2" stroke="#fff" stroke-width="1.4"/></svg>
<svg style="left:1581px;top:530px" width="17" height="17"><path d="M1.5 0.5h8l3.5 3.5v11.5h-11.5Z" fill="url(#docg)" stroke="#b2b2b2" stroke-width="0.9"/><path d="M9.5 0.5v3.5h3.5" fill="none" stroke="#b2b2b2" stroke-width="0.9"/><circle cx="12" cy="12.5" r="3.6" fill="#e23a28" stroke="#a82015" stroke-width="0.6"/><path d="M9.9 12.5h4.2" stroke="#fff" stroke-width="1.5"/></svg>
<svg style="left:1609px;top:529px" width="16" height="17"><path d="M4 2H11V7.5H13.8L7.5 14.5L1.2 7.5H4Z" fill="#5e5e5e" stroke="#4a4a4a" stroke-width="0.6"/><path d="M5 3V8" stroke="#9a9a9a" stroke-width="0.8"/></svg>
<svg style="left:1637px;top:529px" width="16" height="17"><defs><linearGradient id="upg" x1="0" y1="0" x2="0" y2="1"><stop offset="0" stop-color="#86d84a"/><stop offset="1" stop-color="#3fa012"/></linearGradient></defs><path d="M7.5 2L13.8 8.5H11V13.8H4V8.5H1.2Z" fill="url(#upg)" stroke="#3a9010" stroke-width="0.6"/></svg>
<div style="left:1659px;top:524px;width:1px;height:28px;background:linear-gradient(rgba(190,187,183,0.3),#c0bdb9 12%,#c0bdb9 88%,rgba(190,187,183,0.3));"></div>
<svg style="left:1670px;top:529px" width="17" height="19"><defs><linearGradient id="yg" x1="0" y1="0" x2="0" y2="1"><stop offset="0" stop-color="#c4f44a"/><stop offset="1" stop-color="#8cba00"/></linearGradient></defs><path d="M2.5 2H5.8L8 6.2L10.2 2H13.5V3.3L9.5 9.8V12H11.8L8 16.6L4.2 12H6.5V9.8L2.5 3.3Z" fill="url(#yg)" stroke="#3c8c12" stroke-width="1" stroke-linejoin="round"/></svg>
<div style="left:1546px;top:561px;width:370px;height:130px;background:#fff;border:1px solid #a8a4a0;"></div>
<div style="left:1547px;top:562px;width:368px;height:23px;background:linear-gradient(#fafafa,#ebeae8);border-bottom:1px solid #a8a4a0;"></div>
<div style="left:1693px;top:566px;width:1px;height:16px;background:#c8c5c1;"></div>
<div style="left:1733px;top:566px;width:1px;height:16px;background:#c8c5c1;"></div>
<div style="left:1782px;top:566px;width:1px;height:16px;background:#c8c5c1;"></div>
<div class="t" style="left:1552.5px;top:563.65px;font-size:14px;line-height:18px;color:#111;letter-spacing:0.418px;">Name</div>
<div class="t" style="left:1699.5px;top:563.65px;font-size:14px;line-height:18px;color:#111;letter-spacing:0.41px;">Type</div>
<div class="t" style="left:1739px;top:563.65px;font-size:14px;line-height:18px;color:#111;letter-spacing:0.175px;">Async</div>
<div class="t" style="left:1788.5px;top:563.65px;font-size:14px;line-height:18px;color:#111;letter-spacing:0.367px;">Configuration</div>
<div class="t" style="left:1553.3px;top:588.45px;font-size:14px;line-height:18px;color:#111;letter-spacing:0.823px;">x11</div>
<div class="t" style="left:1700.5px;top:588.45px;font-size:14px;line-height:18px;color:#111;letter-spacing:-0.188px;">DUB</div>
<div class="t" style="left:1740.4px;top:588.45px;font-size:14px;line-height:18px;color:#111;letter-spacing:0.287px;">async</div>
<div class="t" style="left:1789px;top:588.45px;font-size:14px;line-height:18px;color:#111;letter-spacing:0.387px;">release - library</div>
<div style="left:1693px;top:586px;width:1px;height:24px;background:repeating-linear-gradient(#000 0 1px,transparent 1px 2px);"></div>
<div style="left:1733px;top:586px;width:1px;height:24px;background:repeating-linear-gradient(#000 0 1px,transparent 1px 2px);"></div>
<div style="left:1782px;top:586px;width:1px;height:24px;background:repeating-linear-gradient(#000 0 1px,transparent 1px 2px);"></div>
<div style="left:1547px;top:610px;width:368px;height:1px;background:repeating-linear-gradient(to right,#000 0 1px,transparent 1px 2px);"></div>
<div class="t" style="left:1553.3px;top:612.45px;font-size:14px;line-height:18px;color:#111;letter-spacing:0.526px;">imageformats.coedit</div>
<div class="t" style="left:1700.5px;top:612.45px;font-size:14px;line-height:18px;color:#111;letter-spacing:-1.227px;">CE</div>
<div class="t" style="left:1740.4px;top:612.45px;font-size:14px;line-height:18px;color:#111;letter-spacing:0.287px;">async</div>
<div class="t" style="left:1789px;top:612.45px;font-size:14px;line-height:18px;color:#111;letter-spacing:0.301px;">release</div>
<div style="left:1693px;top:610px;width:1px;height:24px;background:repeating-linear-gradient(#000 0 1px,transparent 1px 2px);"></div>
<div style="left:1733px;top:610px;width:1px;height:24px;background:repeating-linear-gradient(#000 0 1px,transparent 1px 2px);"></div>
<div style="left:1782px;top:610px;width:1px;height:24px;background:repeating-linear-gradient(#000 0 1px,transparent 1px 2px);"></div>
<div style="left:1547px;top:634px;width:368px;height:1px;background:repeating-linear-gradient(to right,#000 0 1px,transparent 1px 2px);"></div>
<div class="t" style="left:1553.3px;top:636.45px;font-size:14px;line-height:18px;color:#111;letter-spacing:0.406px;">iz.coedit</div>
<div class="t" style="left:1700.5px;top:636.45px;font-size:14px;line-height:18px;color:#111;letter-spacing:-1.227px;">CE</div>
<div class="t" style="left:1740.4px;top:636.45px;font-size:14px;line-height:18px;color:#111;letter-spacing:0.287px;">async</div>
<div class="t" style="left:1789px;top:636.45px;font-size:14px;line-height:18px;color:#111;letter-spacing:0.301px;">release</div>
<div style="left:1693px;top:634px;width:1px;height:24px;background:repeating-linear-gradient(#000 0 1px,transparent 1px 2px);"></div>
<div style="left:1733px;top:634px;width:1px;height:24px;background:repeating-linear-gradient(#000 0 1px,transparent 1px 2px);"></div>
<div style="left:1782px;top:634px;width:1px;height:24px;background:repeating-linear-gradient(#000 0 1px,transparent 1px 2px);"></div>
<div style="left:1547px;top:658px;width:368px;height:1px;background:repeating-linear-gradient(to right,#000 0 1px,transparent 1px 2px);"></div>
<div style="left:1547px;top:658px;width:368px;height:24px;background:linear-gradient(#80a8db,#6892cd);"></div>
<div class="t" style="left:1553.3px;top:660.45px;font-size:14px;line-height:18px;color:#fff;letter-spacing:0.245px;">kheops.ce</div>
<div class="t" style="left:1700.5px;top:660.45px;font-size:14px;line-height:18px;color:#fff;letter-spacing:-1.227px;">CE</div>
<div class="t" style="left:1740.4px;top:660.45px;font-size:14px;line-height:18px;color:#fff;letter-spacing:0.777px;">wait</div>
<div class="t" style="left:1789px;top:660.45px;font-size:14px;line-height:18px;color:#fff;letter-spacing:0.219px;">debug</div>
<div style="left:1693px;top:658px;width:1px;height:24px;background:repeating-linear-gradient(#000 0 1px,transparent 1px 2px);"></div>
<div style="left:1733px;top:658px;width:1px;height:24px;background:repeating-linear-gradient(#000 0 1px,transparent 1px 2px);"></div>
<div style="left:1782px;top:658px;width:1px;height:24px;background:repeating-linear-gradient(#000 0 1px,transparent 1px 2px);"></div>
<div style="left:1547px;top:658px;width:368px;height:1px;background:repeating-linear-gradient(to right,#000 0 1px,transparent 1px 2px);"></div>
<div style="left:1548px;top:697px;width:326px;height:21px;background:#ebeae8;border:1px solid #a8a4a0;"></div>
<div class="t" style="left:1550.5px;top:697.65px;font-size:14px;line-height:18px;color:#111;letter-spacing:0.351px;">No free standing project</div>
<svg style="left:1877px;top:700px" width="17" height="16"><path d="M1.5 14.5L2.5 11L11.5 2L14 4.5L5 13.5Z" fill="#f2a22a" stroke="#b06a10" stroke-width="0.7"/><path d="M11.5 2L14 4.5" stroke="#e080c0" stroke-width="2"/><path d="M1.5 14.5L2.5 11L5 13.5Z" fill="#f6d8a0"/></svg>
<svg style="left:1898px;top:700px" width="17" height="17"><path d="M1.5 0.5h8l3.5 3.5v11.5h-11.5Z" fill="url(#docg)" stroke="#b2b2b2" stroke-width="0.9"/><path d="M9.5 0.5v3.5h3.5" fill="none" stroke="#b2b2b2" stroke-width="0.9"/><circle cx="12" cy="12.5" r="3.6" fill="#5aa620" stroke="#3f7f12" stroke-width="0.6"/><path d="M9.9 12.5h4.2M12 10.4v4.2" stroke="#fff" stroke-width="1.4"/></svg>
<div style="left:1542px;top:724px;width:377px;height:23px;background:#ecebe9;"></div>
<svg style="position:absolute;left:1708px;top:724px" width="47" height="6"><defs><pattern id="dp1708_724" x="0" y="0" width="4" height="4" patternUnits="userSpaceOnUse"><rect x="2" y="0" width="1" height="1" fill="#9c9894"/><rect x="0" y="2" width="1" height="1" fill="#9c9894"/></pattern></defs><rect x="0" y="0" width="47" height="5" fill="url(#dp1708_724)"/></svg>
<svg style="position:absolute;left:1546px;top:735px" width="141" height="6"><defs><pattern id="dp1546_735" x="0" y="0" width="4" height="4" patternUnits="userSpaceOnUse"><rect x="2" y="0" width="1" height="1" fill="#9c9894"/><rect x="0" y="2" width="1" height="1" fill="#9c9894"/></pattern></defs><rect x="0" y="0" width="141" height="5" fill="url(#dp1546_735)"/></svg>
<svg style="position:absolute;left:1766px;top:735px" width="140" height="6"><defs><pattern id="dp1766_735" x="0" y="0" width="4" height="4" patternUnits="userSpaceOnUse"><rect x="2" y="0" width="1" height="1" fill="#9c9894"/><rect x="0" y="2" width="1" height="1" fill="#9c9894"/></pattern></defs><rect x="0" y="0" width="140" height="5" fill="url(#dp1766_735)"/></svg>
<div class="t" style="left:1689px;top:728.15px;font-size:14px;line-height:18px;color:#111;letter-spacing:0.452px;">Tools editor</div>
<svg style="position:absolute;left:1910px;top:733px" width="9" height="9"><path d="M1 1L8 8M8 1L1 8" stroke="#000" stroke-width="2.2"/></svg>
<svg style="left:1553px;top:757px" width="17" height="17"><rect x="0.8" y="1.5" width="14" height="11" fill="#f2f2f2" stroke="#2f86d0" stroke-width="1.3"/><rect x="1.5" y="2.2" width="12.6" height="2" fill="#5aa8e8"/><path d="M3.5 6.5h2M7 6.5h5M3.5 9h2M7 9h4" stroke="#9a9a9a" stroke-width="0.9"/><path d="M6 15.5L7 12.5L13.5 6L15.5 8L9 14.5Z" fill="#f0a030" stroke="#a06010" stroke-width="0.6"/><path d="M13.5 6L15.5 8" stroke="#d070b0" stroke-width="1.5"/></svg>
<svg style="left:1581px;top:757px" width="17" height="17"><rect x="0.8" y="1.5" width="14" height="11" fill="#f2f2f2" stroke="#2f86d0" stroke-width="1.3"/><rect x="1.5" y="2.2" width="12.6" height="2" fill="#5aa8e8"/><path d="M3.5 6.5h2M7 6.5h5M3.5 9h2M7 9h4" stroke="#9a9a9a" stroke-width="0.9"/><circle cx="12.5" cy="12.5" r="3.4" fill="#5aa620" stroke="#3f7f12" stroke-width="0.6"/><path d="M10.5 12.5h4M12.5 10.5v4" stroke="#fff" stroke-width="1.3"/></svg>
<svg style="left:1609px;top:757px" width="17" height="17"><rect x="0.8" y="1.5" width="14" height="11" fill="#f2f2f2" stroke="#2f86d0" stroke-width="1.3"/><rect x="1.5" y="2.2" width="12.6" height="2" fill="#5aa8e8"/><path d="M3.5 6.5h2M7 6.5h5M3.5 9h2M7 9h4" stroke="#9a9a9a" stroke-width="0.9"/><circle cx="12.5" cy="12.5" r="3.4" fill="#e23a28" stroke="#a82015" stroke-width="0.6"/><path d="M10.5 12.5h4" stroke="#fff" stroke-width="1.4"/></svg>
<svg style="left:1636px;top:756px" width="46" height="17"><path d="M5 1h5v7h4.5L7.5 15.5L0.5 8H5Z" fill="url(#bg1)" stroke="#2a80d0" stroke-width="0.6"/><path d="M33 16h5v-7h4.5L35.5 1L28.5 9H33Z" fill="url(#bg1)" stroke="#2a80d0" stroke-width="0.6"/><defs><linearGradient id="bg1" x1="0" y1="0" x2="0" y2="1"><stop offset="0" stop-color="#8fd0ff"/><stop offset="1" stop-color="#2a90e0"/></linearGradient></defs></svg>
<svg style="left:1693px;top:757px" width="17" height="17"><rect x="0.8" y="0.8" width="11" height="9" fill="#f2f2f2" stroke="#2f86d0" stroke-width="1.2"/><rect x="1.4" y="1.4" width="9.8" height="1.8" fill="#5aa8e8"/><rect x="4.8" y="5.8" width="11" height="9.5" fill="#f2f2f2" stroke="#2f86d0" stroke-width="1.2"/><rect x="5.4" y="6.4" width="9.8" height="1.8" fill="#5aa8e8"/></svg>
<div style="left:1715px;top:751px;width:1px;height:28px;background:linear-gradient(rgba(190,187,183,0.3),#c0bdb9 12%,#c0bdb9 88%,rgba(190,187,183,0.3));"></div>
<svg style="left:1726px;top:757px" width="17" height="17"><rect x="0.8" y="1.5" width="14" height="11" fill="#f2f2f2" stroke="#2f86d0" stroke-width="1.3"/><rect x="1.5" y="2.2" width="12.6" height="2" fill="#5aa8e8"/><path d="M3.5 6.5h2M7 6.5h5M3.5 9h2M7 9h4" stroke="#9a9a9a" stroke-width="0.9"/><path d="M13 6L9.5 11H12L10 15.5L15 9.5H12.5L14.5 6Z" fill="#f4b030" stroke="#b07010" stroke-width="0.6"/></svg>
<div style="left:1546px;top:787px;width:352px;height:254px;background:#fff;border:1px solid #a8a4a0;"></div>
<div style="left:1547px;top:788px;width:350px;height:23px;background:linear-gradient(#80a8db,#6892cd);"></div>
<div class="t" style="left:1551.5px;top:789.85px;font-size:14px;line-height:18px;color:#fff;letter-spacing:0.331px;">Yatol this file AST</div>
<div class="t" style="left:1551.5px;top:812.85px;font-size:14px;line-height:18px;color:#111;letter-spacing:0.286px;">Yatol this editor  AST</div>
<div class="t" style="left:1551.5px;top:835.85px;font-size:14px;line-height:18px;color:#111;letter-spacing:0.44px;">Dolphin - this file dir</div>
<div class="t" style="left:1551.5px;top:858.85px;font-size:14px;line-height:18px;color:#111;letter-spacing:0.385px;">Dolphin - this project dir</div>
<div class="t" style="left:1551.5px;top:881.85px;font-size:14px;line-height:18px;color:#111;letter-spacing:0.203px;">Konsole</div>
<div class="t" style="left:1551.5px;top:904.85px;font-size:14px;line-height:18px;color:#111;letter-spacing:0.34px;">Konsole - this project path</div>
<div class="t" style="left:1551.5px;top:927.85px;font-size:14px;line-height:18px;color:#111;letter-spacing:0.333px;">Dscanner - check this file</div>
<div class="t" style="left:1551.5px;top:950.85px;font-size:14px;line-height:18px;color:#111;letter-spacing:0.336px;">Dscanner - check this file no tests</div>
<div class="t" style="left:1551.5px;top:973.85px;font-size:14px;line-height:18px;color:#111;letter-spacing:0.24px;">Dscanner - this file AST</div>
<div class="t" style="left:1551.5px;top:996.85px;font-size:14px;line-height:18px;color:#111;letter-spacing:0.295px;">Dscanner - check this project</div>
<div class="t" style="left:1551.5px;top:1019.85px;font-size:14px;line-height:18px;color:#111;letter-spacing:0.245px;">Dscanner - check MiniExplorer path</div>
<div style="left:1901px;top:787px;width:15px;height:253px;border:1px solid #9e9a96;border-radius:4px;background:#d4d3d1;"></div>
<div style="left:1901px;top:801px;width:15px;height:98px;border:1px solid #5a80b6;background:linear-gradient(to right,#a8c6ec,#86acdc);"></div>
<div style="left:1901px;top:787px;width:15px;height:15px;border:1px solid #8f8b87;border-radius:4px 4px 0 0;background:linear-gradient(to right,#fbfbfa,#e4e3e1);"></div>
<div style="left:1901px;top:1025px;width:15px;height:15px;border:1px solid #8f8b87;border-radius:0 0 4px 4px;background:linear-gradient(to right,#fbfbfa,#e4e3e1);"></div>
<svg style="left:1901px;top:787px" width="15" height="15"><path d="M4.0 9.2L7.5 5.7L11.0 9.2" stroke="#a29e9a" stroke-width="1.5" fill="none"/></svg>
<svg style="left:1901px;top:1025px" width="15" height="15"><path d="M4.0 5.8L7.5 9.3L11.0 5.8" stroke="#222" stroke-width="1.6" fill="none"/></svg>
<svg style="left:1901px;top:846.0px" width="15" height="8"><path d="M5.0 1.5h5M5.0 4h5M5.0 6.5h5" stroke="#46628e" stroke-width="1"/></svg>
<div style="left:577px;top:454px;width:545px;height:288px;background:#fcfcfc;border:1px solid #000;"></div>
<div class="t" style="left:580.5px;top:455.36px;font-family:'Liberation Mono', monospace;font-size:16.67px;line-height:20px;color:#000;font-weight:bold;">_strokeBrush</div>
<div class="t" style="left:712.5px;top:455.36px;font-family:'Liberation Mono', monospace;font-size:16.67px;line-height:20px;color:#8c8c8c;font-style:italic;">(variable)</div>
<div class="t" style="left:580.5px;top:477.36px;font-family:'Liberation Mono', monospace;font-size:16.67px;line-height:20px;color:#000;font-weight:bold;">_strokeGradient</div>
<div class="t" style="left:742.5px;top:477.36px;font-family:'Liberation Mono', monospace;font-size:16.67px;line-height:20px;color:#8c8c8c;font-style:italic;">(variable)</div>
<div class="t" style="left:580.5px;top:499.36px;font-family:'Liberation Mono', monospace;font-size:16.67px;line-height:20px;color:#000;font-weight:bold;">alignof</div>
<div class="t" style="left:662.5px;top:499.36px;font-family:'Liberation Mono', monospace;font-size:16.67px;line-height:20px;color:#1c1c90;font-style:italic;">(reserved word)</div>
<div class="t" style="left:580.5px;top:521.36px;font-family:'Liberation Mono', monospace;font-size:16.67px;line-height:20px;color:#000;font-weight:bold;">applyBrushToCairo</div>
<div class="t" style="left:762.5px;top:521.36px;font-family:'Liberation Mono', monospace;font-size:16.67px;line-height:20px;color:#1e8c1e;font-style:italic;">(function)</div>
<div class="t" style="left:580.5px;top:543.36px;font-family:'Liberation Mono', monospace;font-size:16.67px;line-height:20px;color:#000;font-weight:bold;">arc</div>
<div class="t" style="left:622.5px;top:543.36px;font-family:'Liberation Mono', monospace;font-size:16.67px;line-height:20px;color:#1e8c1e;font-style:italic;">(function)</div>
<div class="t" style="left:580.5px;top:565.36px;font-family:'Liberation Mono', monospace;font-size:16.67px;line-height:20px;color:#000;font-weight:bold;">beginControl</div>
<div class="t" style="left:712.5px;top:565.36px;font-family:'Liberation Mono', monospace;font-size:16.67px;line-height:20px;color:#1e8c1e;font-style:italic;">(function)</div>
<div class="t" style="left:580.5px;top:587.36px;font-family:'Liberation Mono', monospace;font-size:16.67px;line-height:20px;color:#000;font-weight:bold;">beginPath</div>
<div class="t" style="left:682.5px;top:587.36px;font-family:'Liberation Mono', monospace;font-size:16.67px;line-height:20px;color:#1e8c1e;font-style:italic;">(function)</div>
<div class="t" style="left:580.5px;top:609.36px;font-family:'Liberation Mono', monospace;font-size:16.67px;line-height:20px;color:#000;font-weight:bold;">circle</div>
<div class="t" style="left:652.5px;top:609.36px;font-family:'Liberation Mono', monospace;font-size:16.67px;line-height:20px;color:#1e8c1e;font-style:italic;">(function)</div>
<div class="t" style="left:580.5px;top:631.36px;font-family:'Liberation Mono', monospace;font-size:16.67px;line-height:20px;color:#000;font-weight:bold;">closePath</div>
<div class="t" style="left:682.5px;top:631.36px;font-family:'Liberation Mono', monospace;font-size:16.67px;line-height:20px;color:#1e8c1e;font-style:italic;">(function)</div>
<div class="t" style="left:580.5px;top:653.36px;font-family:'Liberation Mono', monospace;font-size:16.67px;line-height:20px;color:#000;font-weight:bold;">curve</div>
<div class="t" style="left:642.5px;top:653.36px;font-family:'Liberation Mono', monospace;font-size:16.67px;line-height:20px;color:#1e8c1e;font-style:italic;">(function)</div>
<div class="t" style="left:580.5px;top:675.36px;font-family:'Liberation Mono', monospace;font-size:16.67px;line-height:20px;color:#000;font-weight:bold;">drawImage</div>
<div class="t" style="left:682.5px;top:675.36px;font-family:'Liberation Mono', monospace;font-size:16.67px;line-height:20px;color:#1e8c1e;font-style:italic;">(function)</div>
<div style="left:578px;top:697px;width:527px;height:22px;background:#86aad8;"></div>
<div class="t" style="left:580.5px;top:697.36px;font-family:'Liberation Mono', monospace;font-size:16.67px;line-height:20px;color:#fff;font-weight:bold;">drawPath</div>
<div class="t" style="left:672.5px;top:697.36px;font-family:'Liberation Mono', monospace;font-size:16.67px;line-height:20px;color:#1e8c1e;font-style:italic;">(function)</div>
<div class="t" style="left:580.5px;top:719.36px;font-family:'Liberation Mono', monospace;font-size:16.67px;line-height:20px;color:#000;font-weight:bold;">drawText</div>
<div class="t" style="left:672.5px;top:719.36px;font-family:'Liberation Mono', monospace;font-size:16.67px;line-height:20px;color:#1e8c1e;font-style:italic;">(function)</div>
<div style="left:1106px;top:455px;width:15px;height:272px;border:1px solid #9e9a96;border-radius:4px;background:#d4d3d1;"></div>
<div style="left:1106px;top:519px;width:15px;height:44px;border:1px solid #5a80b6;background:linear-gradient(to right,#a8c6ec,#86acdc);"></div>
<div style="left:1106px;top:455px;width:15px;height:15px;border:1px solid #8f8b87;border-radius:4px 4px 0 0;background:linear-gradient(to right,#fbfbfa,#e4e3e1);"></div>
<div style="left:1106px;top:712px;width:15px;height:15px;border:1px solid #8f8b87;border-radius:0 0 4px 4px;background:linear-gradient(to right,#fbfbfa,#e4e3e1);"></div>
<svg style="left:1106px;top:455px" width="15" height="15"><path d="M4.0 9.2L7.5 5.7L11.0 9.2" stroke="#222" stroke-width="1.5" fill="none"/></svg>
<svg style="left:1106px;top:712px" width="15" height="15"><path d="M4.0 5.8L7.5 9.3L11.0 5.8" stroke="#222" stroke-width="1.6" fill="none"/></svg>
<svg style="left:1106px;top:537.0px" width="15" height="8"><path d="M5.0 1.5h5M5.0 4h5M5.0 6.5h5" stroke="#46628e" stroke-width="1"/></svg>
<div style="left:1106px;top:727px;width:15px;height:14px;background:#eeedec;"></div>
<svg style="left:1108px;top:728px" width="12" height="12"><path d="M11 3L3 11M11 7L7 11" stroke="#b8b5b1" stroke-width="1"/></svg>
<svg style="position:absolute;left:343px;top:528px" width="6" height="46"><defs><pattern id="vp343_528" x="0" y="0" width="4" height="4" patternUnits="userSpaceOnUse"><rect x="0" y="2" width="1" height="1" fill="#9c9894"/><rect x="2" y="0" width="1" height="1" fill="#9c9894"/></pattern></defs><rect x="0" y="0" width="5" height="46" fill="url(#vp343_528)"/></svg>
<svg style="position:absolute;left:1538px;top:528px" width="6" height="46"><defs><pattern id="vp1538_528" x="0" y="0" width="4" height="4" patternUnits="userSpaceOnUse"><rect x="0" y="2" width="1" height="1" fill="#9c9894"/><rect x="2" y="0" width="1" height="1" fill="#9c9894"/></pattern></defs><rect x="0" y="0" width="5" height="46" fill="url(#vp1538_528)"/></svg>
<svg style="position:absolute;left:937px;top:56px" width="47" height="6"><defs><pattern id="dp937_56" x="0" y="0" width="4" height="4" patternUnits="userSpaceOnUse"><rect x="2" y="0" width="1" height="1" fill="#9c9894"/><rect x="0" y="2" width="1" height="1" fill="#9c9894"/></pattern></defs><rect x="0" y="0" width="47" height="5" fill="url(#dp937_56)"/></svg>
<svg style="position:absolute;left:147px;top:644px" width="47" height="6"><defs><pattern id="dp147_644" x="0" y="0" width="4" height="4" patternUnits="userSpaceOnUse"><rect x="2" y="0" width="1" height="1" fill="#9c9894"/><rect x="0" y="2" width="1" height="1" fill="#9c9894"/></pattern></defs><rect x="0" y="0" width="47" height="5" fill="url(#dp147_644)"/></svg>
<svg style="position:absolute;left:147px;top:741px" width="47" height="6"><defs><pattern id="dp147_741" x="0" y="0" width="4" height="4" patternUnits="userSpaceOnUse"><rect x="2" y="0" width="1" height="1" fill="#9c9894"/><rect x="0" y="2" width="1" height="1" fill="#9c9894"/></pattern></defs><rect x="0" y="0" width="47" height="5" fill="url(#dp147_741)"/></svg>
</div></body></html>
